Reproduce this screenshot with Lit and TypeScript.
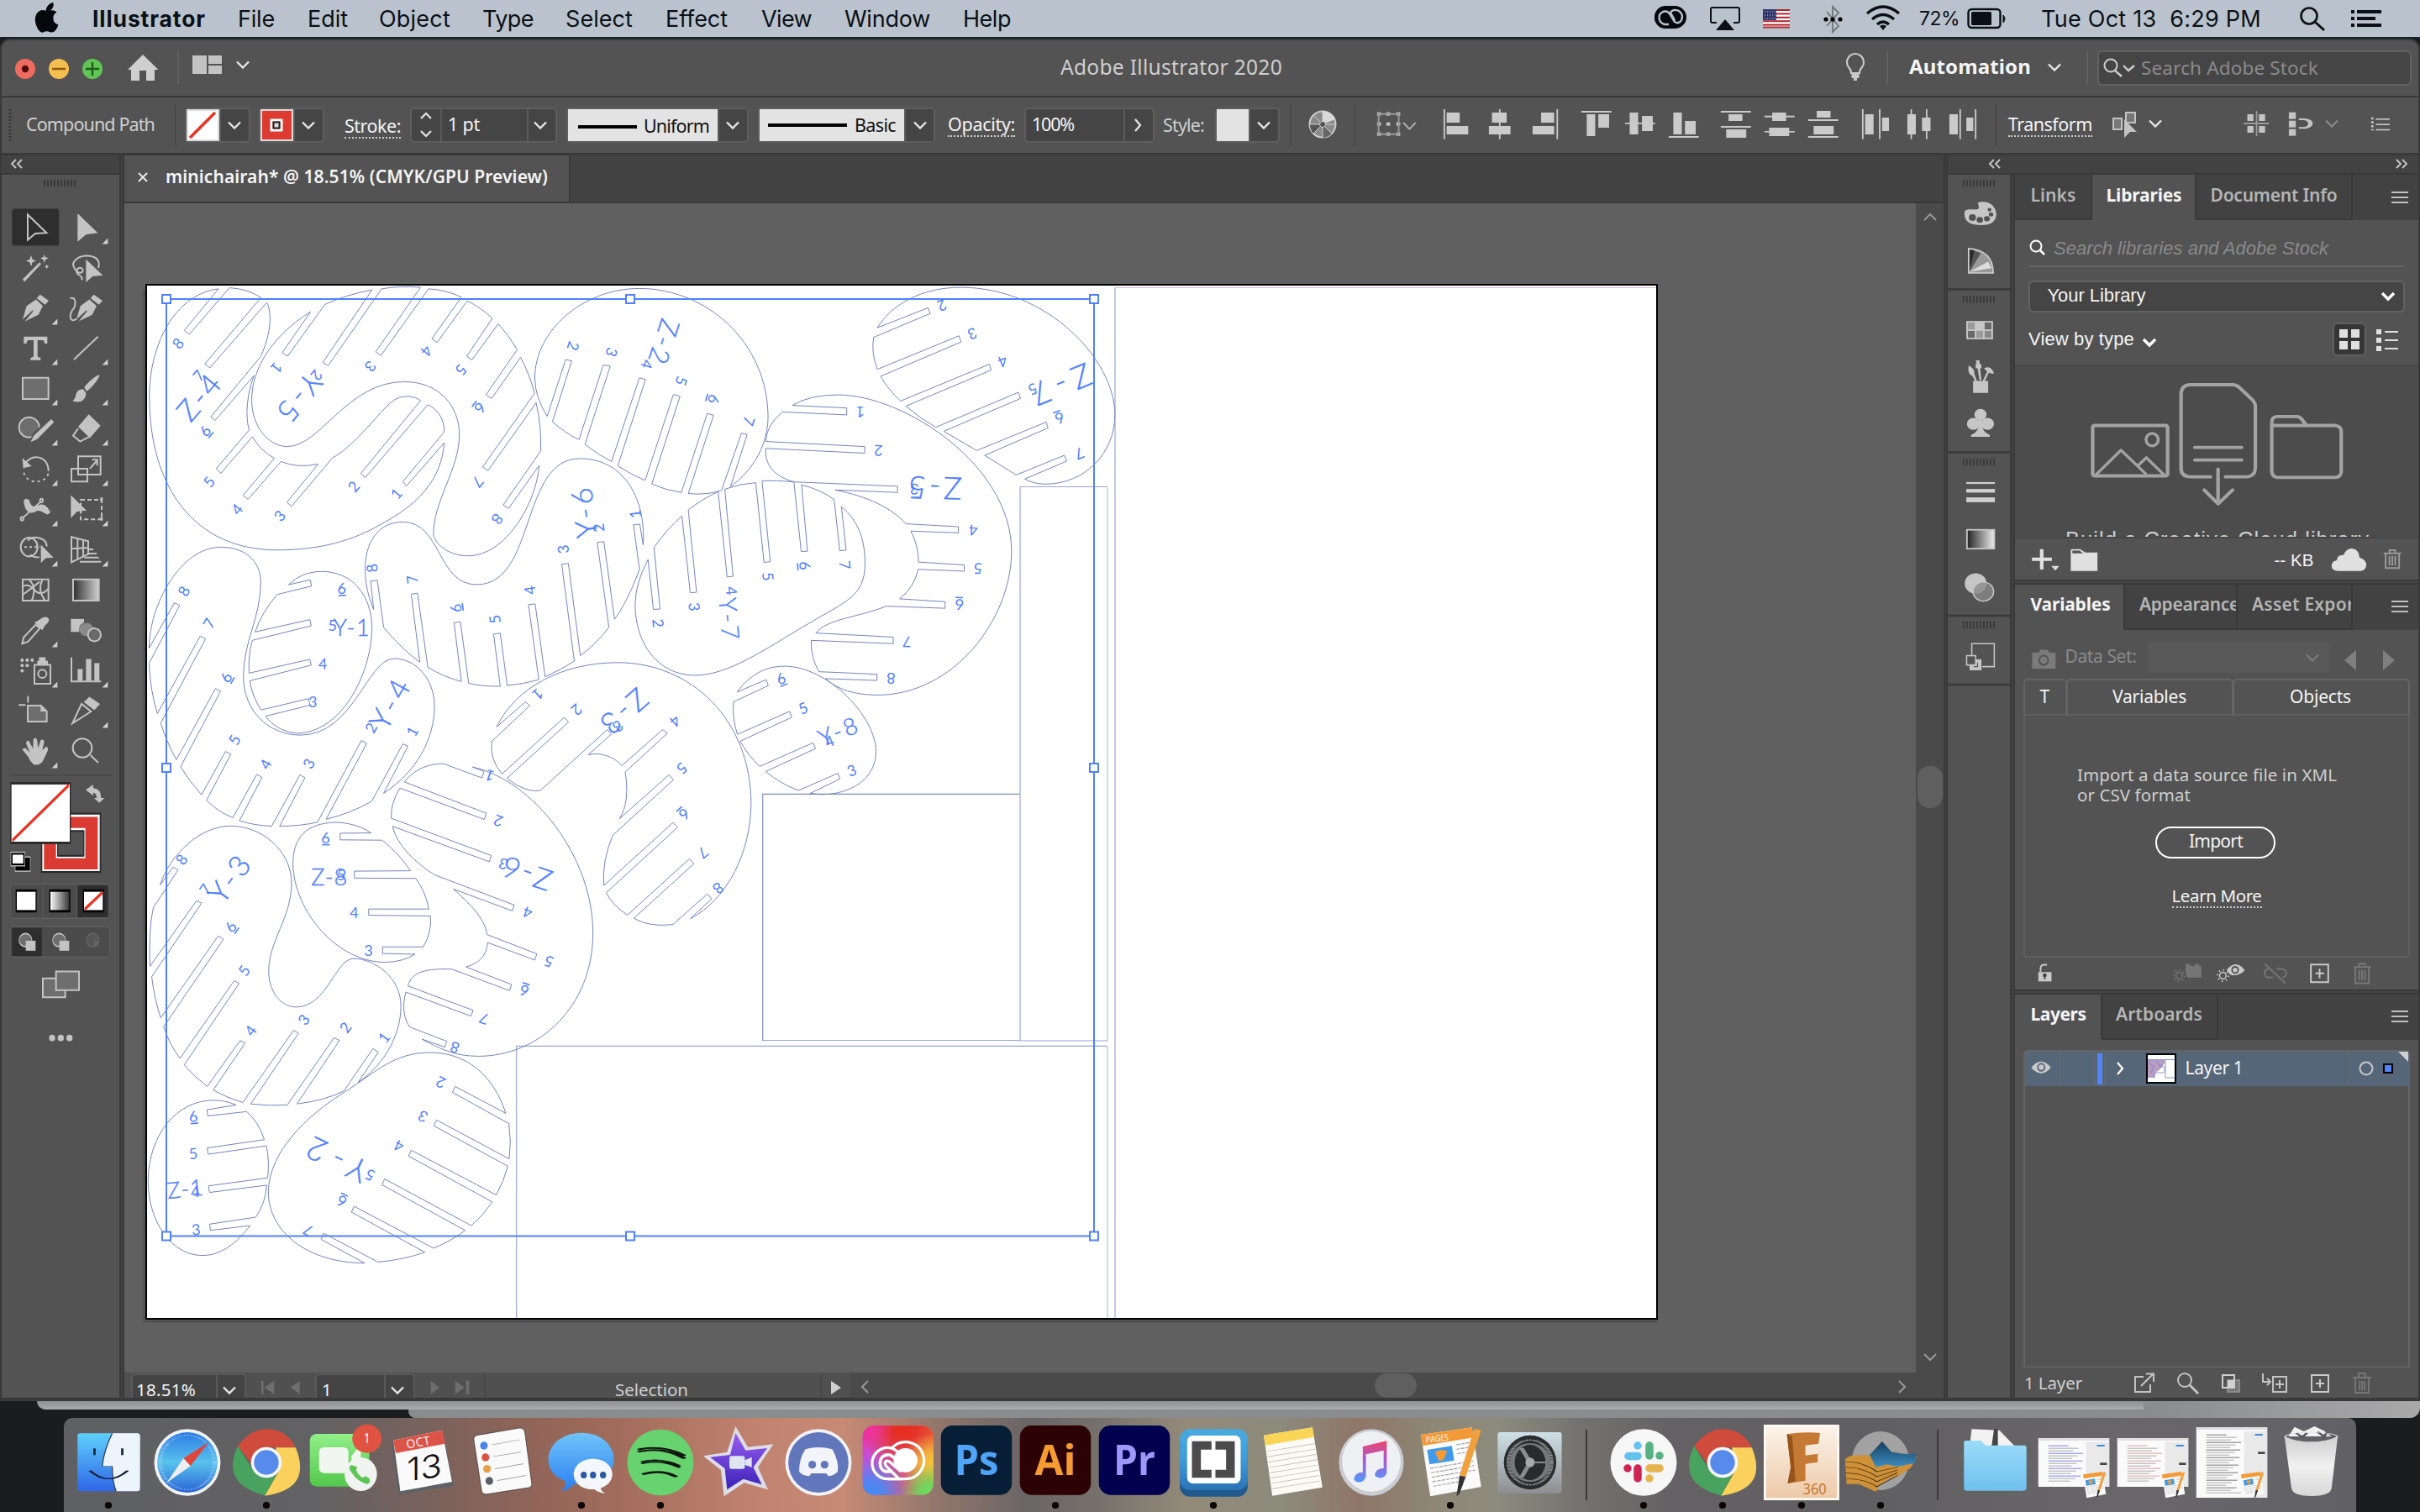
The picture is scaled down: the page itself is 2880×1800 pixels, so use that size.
import { LitElement, html, svg, css, nothing } from "lit";

type Item = { x: number; y: number; w: number; h: number; t: unknown; c?: string };
type View = { ox: number; oy: number; sx: number; sy: number };

/* Icon coordinate spaces: origin on the page plus units per pixel. */
const LEFT: View = { ox: 0, oy: 0, sx: 1.08889, sy: 3 };
const RIGHT: View = { ox: 1440, oy: 0, sx: 1.08889, sy: 3 };
const STATUS_L: View = { ox: 0, oy: 1600, sx: 1.08889, sy: 3 };
const LIB: View = { ox: 2280, oy: 180, sx: 2.6133, sy: 2.8 };
const VARS: View = { ox: 2280, oy: 690, sx: 2.6133, sy: 2.529 };

/* Line of boxes flowing left to right; gaps come from the item data. */
const row = (ox: number, oy: number, items: Item[]) => {
  let cur = ox;
  return html`<div class="row">${items.map((i) => {
    const m = i.x - cur;
    cur = i.x + i.w;
    return html`<div class="cell ${i.c ?? ""}" style="margin:${i.y - oy}px 0 0 ${m}px;width:${i.w}px;height:${i.h}px">${i.t}</div>`;
  })}</div>`;
};

const BASE: Record<string, number> = { ui: 0.888, sf: 0.864, hv: 0.8465 };
const tx = (x: number, base: number, w: number, size: number, text: string, cls = "", font = "ui"): Item => ({
  x, y: base - BASE[font] * size, w, h: size, c: `txt ${font} ${cls}`,
  t: html`<fit-text .w=${w} .size=${size} .text=${text}></fit-text>`,
});

const ic = (v: View, x0: number, y0: number, x1: number, y1: number, body: unknown): Item => {
  const w = (x1 - x0) / v.sx, h = (y1 - y0) / v.sy;
  return {
    x: v.ox + x0 / v.sx, y: v.oy + y0 / v.sy, w, h,
    t: html`<svg class="ic" width=${w} height=${h} viewBox="${x0} ${y0} ${x1 - x0} ${y1 - y0}" preserveAspectRatio="none">${body}</svg>`,
  };
};
const px = (x: number, y: number, w: number, h: number, body: unknown): Item => ({
  x, y, w, h, t: html`<svg class="ic" width=${w} height=${h} viewBox="${x} ${y} ${w} ${h}">${body}</svg>`,
});
const box = (x: number, y: number, w: number, h: number, c: string, items: Item[] = [], b = 0): Item => ({
  x, y, w, h, c, t: items.length ? row(x + b, y + b, items) : nothing,
});
const chev = (cx: number, cy: number, col = "#e6e6e6", r = 7) =>
  px(cx - 9, cy - 8, 18, 16, svg`<path d="M${cx - r},${cy - r / 2} L${cx},${cy + r / 2} L${cx + r},${cy - r / 2}" fill="none" stroke=${col} stroke-width="2.4"/>`);
const R = (l: number[][]) => l.map((r) => svg`<rect x=${r[0]} y=${r[1]} width=${r[2]} height=${r[3]}/>`);
const vline = (x: number, y: number, h: number, c = "sep") => box(x, y, 2, h, c);

class FitText extends LitElement {
  static properties = { w: { type: Number }, size: { type: Number }, text: { type: String } };
  declare w: number; declare size: number; declare text: string;
  static styles = css`
    :host { display: block; white-space: pre; line-height: 1; }
    span { display: inline-block; }
  `;
  render() { return html`<span style="font-size:${this.size}px">${this.text}</span>`; }
  updated() {
    const s = this.renderRoot.querySelector("span") as HTMLElement;
    s.style.letterSpacing = "0";
    const n = s.getBoundingClientRect().width;
    s.style.letterSpacing = `${(this.w - n) / this.text.length}px`;
  }
}
customElements.define("fit-text", FitText);

/* ---------- artwork ---------- */
const A: View = { ox: 160, oy: 320, sx: 2.529, sy: 2.3059 };
const B: View = { ox: 740, oy: 320, sx: 2.529, sy: 2.3059 };
const C: View = { ox: 160, oy: 920, sx: 2.529, sy: 2.3059 };
type Piece = { v: View; d: string; a: number; n: [string, number, number][]; big: [string, number, number, number, number] };
const PIECES: Piece[] = [
  { v: A, a: -50, big: ["Z-4", 193, 353, 35, 60],
    n: [["8", 131, 205], ["7", 193, 293], ["6", 213, 445], ["5", 225, 585], ["4", 309, 660], ["3", 437, 678], ["2", 660, 598], ["1", 788, 617]],
    d: "M253,55 C120,70 45,210 45,350 C45,600 180,772 430,772 C560,772 660,745 740,702 C850,650 925,580 932,478 L819,596 L808,584 L932,448 C935,420 915,385 883,373 L695,573 L681,562 L861,362 C845,350 815,345 788,357 C750,373 680,475 595,520 L473,652 L459,641 L553,536 Q490,548 441,529 L342,633 L327,622 L421,520 Q380,500 355,461 L260,561 L246,549 L345,443 C332,400 340,340 360,293 L243,416 L230,406 L380,241 C400,200 415,150 405,110 Q402,95 398,93 L227,272 L212,261 L381,79 Q340,55 286,52 L165,180 L150,169 Z" },
  { v: A, a: 129, big: ["Y-5", 497, 353, 35, 62],
    n: [["1", 428, 272], ["2", 548, 292], ["3", 710, 268], ["4", 879, 226], ["5", 983, 277], ["6", 1040, 382], ["7", 1033, 585], ["8", 1092, 687]],
    d: "M530,118 C420,180 353,270 353,360 C353,430 400,487 460,488 C560,488 640,310 812,310 C920,310 978,380 978,455 C978,550 898,640 900,730 C905,755 945,788 1003,788 C1120,788 1210,640 1218,540 L1126,658 L1110,648 L1223,500 Q1225,430 1209,368 L1064,554 L1048,544 L1204,342 Q1190,290 1162,243 L1075,356 L1058,346 L1152,222 Q1125,180 1095,151 L1016,250 L1000,240 L1077,136 Q1045,108 1002,88 L911,202 L895,192 L984,78 Q940,58 885,55 L742,238 L726,228 L861,51 Q800,46 744,55 L583,266 L567,257 L715,58 Q640,70 573,98 L461,240 L445,230 Z" },
  { v: A, a: 0, big: ["Y-1", 653, 986, 27, 43],
    n: [["6", 624, 877], ["5", 596, 978], ["4", 567, 1084], ["3", 537, 1189]],
    d: "M464,867 C490,845 520,831 565,831 C650,831 715,890 715,990 C710,1120 620,1273 490,1275 C450,1272 415,1255 395,1228 L528,1198 L524,1180 L381,1211 Q355,1175 347,1131 L532,1088 L528,1072 L345,1110 Q342,1060 355,1020 L532,980 L528,963 L363,997 Q385,940 430,894 L533,871 L529,854 Z" },
  { v: A, a: -97, big: ["Y-6", 1353, 670, 35, 60],
    n: [["1", 1507, 673], ["2", 1397, 711], ["3", 1290, 770], ["4", 1190, 882], ["5", 1085, 962], ["6", 967, 932], ["7", 836, 853], ["8", 715, 822]],
    d: "M720,935 L711,857 L731,855 L750,984 Q800,1040 859,1080 L833,893 L852,891 L883,1094 Q930,1120 984,1133 L962,972 L981,969 L1006,1138 Q1050,1147 1101,1146 L1081,1003 L1101,1000 L1122,1144 Q1170,1140 1217,1128 L1186,922 L1206,920 L1236,1120 Q1285,1100 1324,1077 L1286,811 L1306,809 L1342,1062 Q1390,1030 1428,984 L1393,751 L1413,749 L1445,962 C1480,920 1510,850 1520,825 L1502,703 L1521,701 L1531,758 C1540,640 1480,521 1340,521 C1160,521 1210,867 1030,867 C910,867 925,695 808,695 C690,695 670,830 720,935 Z" },
  { v: A, a: -61, big: ["Y-4", 768, 1195, 35, 62],
    n: [["8", 149, 885], ["7", 225, 973], ["6", 276, 1122], ["5", 301, 1293], ["4", 395, 1360], ["3", 525, 1358], ["2", 712, 1260], ["1", 836, 1270]],
    d: "M44,1042 L120,917 L136,924 L44,1083 Q48,1160 69,1221 L198,1008 L214,1016 L79,1247 Q95,1295 126,1348 L244,1152 L259,1160 L139,1367 Q165,1407 202,1444 L274,1325 L290,1333 L217,1459 Q250,1490 296,1507 L368,1388 L384,1396 L316,1515 Q360,1528 413,1530 L498,1389 L513,1397 L437,1530 Q500,1530 551,1519 L683,1295 L699,1303 L577,1511 Q650,1495 714,1462 L808,1304 L823,1311 L750,1440 C850,1380 903,1290 903,1200 C903,1130 850,1070 782,1070 C700,1070 660,1280 500,1280 C400,1280 328,1210 328,1120 C328,1020 380,960 380,860 C380,800 330,764 260,764 C140,764 45,920 44,1042 Z" },
  { v: C, a: 199, big: ["Z-6", 1182, 277, 35, 60],
    n: [["1", 1069, 8], ["2", 1095, 132], ["3", 1110, 250], ["4", 1183, 383], ["5", 1247, 518], ["6", 1173, 598], ["7", 1052, 675], ["8", 964, 754]],
    d: "M1017,-16 L1052,-4 L1046,14 L930,-25 C870,-25 835,0 812,25 L1059,111 L1053,128 L799,42 Q770,85 773,125 L1074,227 L1068,244 L777,147 C790,200 850,250 903,280 L1143,363 L1137,379 L960,319 C1010,360 1055,400 1061,444 L1211,497 L1205,514 L1063,466 C1060,500 1040,522 998,533 L1135,581 L1129,598 L955,539 C880,537 835,545 823,585 L1019,652 L1013,668 L817,602 C805,640 810,675 829,698 L940,737 L934,753 L865,731 C915,755 960,778 1035,778 C1220,778 1380,640 1380,440 C1380,230 1200,20 1017,-16 Z" },
  { v: C, a: 0, big: ["Z-8", 586, 287, 27, 43],
    n: [["6", 575, 178], ["5", 622, 280], ["4", 661, 383], ["3", 704, 487]],
    d: "M712,165 C680,145 640,136 600,136 C520,140 477,175 477,250 C480,380 610,520 755,520 Q805,520 845,498 L747,496 L747,478 L869,478 Q895,440 891,393 L705,391 L705,374 L886,374 Q878,330 847,290 L662,289 L662,270 L831,269 Q790,215 745,185 L619,184 L619,166 Z" },
  { v: C, a: -54, big: ["Y-3", 285, 292, 35, 60],
    n: [["8", 142, 238], ["7", 213, 320], ["6", 290, 423], ["5", 330, 543], ["4", 350, 708], ["3", 510, 678], ["2", 635, 699], ["1", 751, 727]],
    d: "M77,308 L116,259 L131,267 L57,370 C45,420 45,480 47,531 L187,351 L202,358 L52,560 Q60,620 79,673 L252,448 L268,457 L88,697 Q105,745 137,784 L300,571 L315,578 L150,802 Q180,835 219,861 L318,735 L333,742 L237,871 Q280,893 326,905 L479,707 L494,715 L350,909 Q400,915 460,912 L601,727 L617,735 L489,909 Q570,900 630,874 L718,757 L734,767 L673,850 C740,810 802,730 802,640 C802,560 720,510 660,510 C605,510 580,643 487,643 C440,643 404,600 404,545 C404,460 473,400 473,300 C470,210 380,146 290,146 C200,146 110,220 77,308 Z" },
  { v: C, a: -6, big: ["Z-1", 152, 1142, 27, 43],
    n: [["6", 177, 943], ["5", 177, 1045], ["4", 183, 1150], ["3", 185, 1254]],
    d: "M306,912 C280,902 260,899 235,899 C130,900 43,990 41,1120 C41,1230 110,1325 205,1325 C260,1325 310,1290 348,1243 L229,1256 L226,1239 L365,1220 Q395,1180 398,1132 L226,1152 L223,1134 L401,1112 Q407,1065 397,1024 L222,1047 L219,1030 L391,1007 Q375,960 338,930 L221,942 L218,925 Z" },
  { v: C, a: 206, big: ["Y-2", 610, 1062, 38, 76],
    n: [["2", 922, 850], ["3", 868, 943], ["4", 795, 1024], ["5", 709, 1104], ["6", 624, 1176], ["7", 523, 1256]],
    d: "M1118,935 C1080,830 1000,768 890,768 C780,768 730,820 630,878 C520,940 405,1040 403,1150 C403,1260 520,1345 693,1346 L562,1281 L569,1264 L733,1343 Q810,1337 874,1316 L653,1206 L661,1190 L900,1305 Q955,1285 995,1256 L745,1131 L753,1115 L1014,1243 Q1050,1215 1077,1178 L825,1052 L833,1036 L1089,1159 Q1112,1120 1124,1080 L901,969 L909,953 L1128,1060 Q1135,1010 1127,963 L957,877 L965,861 Z" },
  { v: A, a: 108, big: ["Z-2", 1594, 200, 32, 54],
    n: [["2", 1320, 212], ["3", 1436, 229], ["4", 1542, 262], ["5", 1646, 308], ["6", 1743, 358], ["7", 1849, 418]],
    d: "M1242,405 L1298,249 L1316,253 L1258,420 Q1295,450 1338,469 L1411,264 L1432,267 L1356,482 Q1395,510 1436,529 L1520,299 L1538,304 L1455,541 Q1495,565 1537,581 L1622,345 L1642,350 L1557,591 Q1600,608 1646,614 L1724,397 L1743,402 L1667,617 Q1725,622 1767,608 L1827,451 L1844,455 L1794,598 C1867,550 1905,480 1907,410 C1907,200 1720,54 1520,54 C1350,54 1205,170 1205,300 Q1205,350 1242,405 Z" },
  { v: B, a: 158, big: ["Z-7", 1323, 318, 38, 74],
    n: [["2", 964, 100], ["3", 1055, 178], ["4", 1146, 254], ["5", 1237, 330], ["6", 1318, 410], ["7", 1377, 507]],
    d: "M769,162 C810,100 900,51 1020,51 C1280,51 1484,250 1484,400 C1484,510 1390,591 1275,591 Q1240,591 1213,577 L1339,528 L1332,512 L1187,566 L1092,512 L1283,437 L1277,421 L1068,499 L969,446 L1200,356 L1194,339 L945,435 Q900,412 855,377 L1112,278 L1106,262 L839,363 Q800,330 779,295 L1021,201 L1015,184 L769,276 Q750,230 758,188 L928,123 L922,107 Z" },
  { v: B, a: 182, big: ["Z-5", 943, 602, 37, 64],
    n: [["1", 718, 393], ["2", 772, 499], ["3", 880, 605], ["4", 1057, 717], ["5", 1072, 823], ["6", 1016, 922], ["7", 858, 1024], ["8", 810, 1124]],
    d: "M513,375 L677,382 L677,401 L483,393 Q435,430 433,474 L731,488 L731,506 L433,493 C430,540 460,570 518,585 L830,597 L830,614 L642,607 C740,625 810,655 855,700 L1013,708 L1013,725 L870,720 Q893,760 893,805 L1031,813 L1031,830 L892,825 Q880,875 836,906 L973,914 L973,932 L797,926 C700,960 620,960 584,1000 L817,1011 L817,1029 L570,1020 Q568,1065 593,1106 L768,1113 L768,1130 L613,1125 C650,1155 700,1170 770,1170 C1000,1170 1173,960 1173,775 C1173,540 850,346 650,346 Q565,346 513,375 Z" },
  { v: B, a: 85, big: ["Y-7", 323, 960, 29, 50],
    n: [["2", 109, 973], ["3", 218, 928], ["4", 330, 884], ["5", 440, 845], ["6", 551, 815], ["7", 671, 813]],
    d: "M79,798 L95,935 L115,934 L97,765 Q135,715 181,679 L206,889 L225,888 L200,662 Q245,630 290,612 L317,846 L335,844 L310,605 Q355,590 403,587 L428,806 L447,804 L422,582 Q470,580 518,585 L540,776 L559,775 L541,593 Q595,605 639,633 L656,774 L675,772 L661,653 C710,690 732,740 732,810 C732,900 670,915 560,975 C430,1045 320,1116 220,1116 C110,1116 40,1030 40,920 Q42,860 79,798 Z" },
  { v: B, a: 139, big: ["Z-3", 8, 1215, 35, 62],
    n: [["1", -253, 1168], ["2", -136, 1210], ["3", -12, 1256], ["4", 160, 1242], ["5", 181, 1371], ["6", 188, 1497], ["7", 244, 1603], ["8", 290, 1700]],
    d: "M-377,1258 L-290,1189 L-277,1199 L-391,1297 Q-399,1345 -361,1387 L-174,1232 L-160,1244 L-346,1399 Q-287,1440 -245,1432 L-44,1265 L-31,1277 L-101,1334 C-57,1325 -17,1345 0,1364 L123,1265 L137,1275 L10,1382 C20,1430 15,1480 -7,1510 L142,1389 L155,1403 L-27,1555 Q-60,1624 -54,1693 L154,1520 L168,1533 L-47,1713 Q-27,1748 17,1774 L203,1620 L217,1633 L36,1783 Q84,1808 154,1800 L257,1716 L271,1729 L206,1784 C320,1730 388,1599 389,1468 C389,1240 210,1081 -12,1081 C-180,1081 -320,1150 -377,1258 Z" },
  { v: B, a: -22, big: ["Y-8", 650, 1270, 28, 48],
    n: [["6", 479, 1125], ["5", 546, 1206], ["4", 625, 1297], ["3", 692, 1377]],
    d: "M347,1162 C385,1115 430,1091 490,1091 C620,1091 765,1230 765,1325 C765,1400 690,1443 600,1443 L567,1440 L657,1400 L650,1385 L532,1432 Q480,1415 433,1380 L583,1317 L576,1301 L415,1366 Q380,1335 356,1297 L512,1231 L505,1215 L348,1278 Q332,1235 336,1189 L441,1144 L434,1128 Z" },
];
const label = (v: View, t: string, x: number, y: number, a: number, s: number, len?: number) => {
  const X = v.ox + x / v.sx, Y = v.oy + y / v.sy;
  return svg`<g transform="translate(${X},${Y}) rotate(${a})">
    <text class=${len ? "big" : ""} y=${s * 0.36} font-size=${s} text-anchor="middle" textLength=${len ?? nothing}>${t}</text>
    ${t === "6" ? svg`<path d="M-4,${s * 0.36 + 2} H5" stroke="#4f80ff" stroke-width="1.6"/>` : nothing}</g>`;
};
const artwork = () => svg`
  <rect x="170" y="345" width="6" height="1229" fill="#525252"/><rect x="172" y="1570" width="1800" height="5" fill="#525252"/>
  <rect x="174" y="339" width="1798" height="1231" fill="#fff" stroke="#000" stroke-width="2"/>
  <g fill="none" stroke-width="2" stroke="#d3d9ee">
    <path d="M1318,580 V1239 M1318,1246 V1569"/><path d="M1214,580 V945" stroke="#c3cae6"/>
  </g>
  <g fill="none" stroke="#9ba7d6" stroke-width="1.2">
    <path d="M1327,1569 V342"/><path d="M1327,342.500 H1971" stroke="#dcb9ea"/>
    <path d="M1214,579.500 H1318 M1214,945 V1239 H1318"/>
    <path d="M907.700,1239 V945.300 H1213.500" stroke="#7d8cc6"/><path d="M908,1238.500 H1214"/>
    <path d="M614.700,1569 V1245.300 H1318"/>
  </g>
  ${PIECES.map((p) => svg`<path class="cut" d=${p.d} transform="translate(${p.v.ox},${p.v.oy}) scale(${1 / p.v.sx},${1 / p.v.sy})"/>`)}
  <g class="nums">${PIECES.map((p) => svg`
    ${p.n.map((n) => label(p.v, n[0], n[1], n[2], p.a, 18))}
    ${label(p.v, p.big[0], p.big[1], p.big[2], p.a, p.big[3], p.big[4])}`)}</g>
  <rect x="198" y="356" width="1104" height="1115.500" fill="none" stroke="#4f80ff" stroke-width="2"/>
  ${[[198, 356], [750, 356], [1302, 356], [198, 914], [1302, 914], [198, 1471.5], [750, 1471.5], [1302, 1471.5]].map(
    ([x, y]) => svg`<rect x=${x - 5} y=${y - 5} width="10" height="10" fill="#fff" stroke="#4f80ff" stroke-width="2"/>`)}
`;

const grad = (id: string, stops: string[], v = true) => svg`<linearGradient id=${id} x1="0" y1="0" x2=${v ? 0 : 1} y2=${v ? 1 : 0}>${stops.map((s, i) => svg`<stop offset=${i / (stops.length - 1)} stop-color=${s}/>`)}</linearGradient>`;

/* ---------- tools ---------- */
const g = "#c3c3c3";
const TOOL_ICONS: unknown[] = [
  svg`<rect x="42" y="97" width="168" height="63" rx="8" ry="5" fill="#2e2e2e"/><path class="s" d="M98,107 L165,138 L125,139 L98,150 Z"/>`,
  svg`<path class="f" d="M276,105 L348,138 L306,141 L276,153 Z"/>`,
  svg`<path class="f" d="M80,217 L140,188 L146,191 L86,221 Z M110,176 l5,7 13,3 -13,2 -5,7 -5,-7 -13,-2 13,-3 Z M157,174 l3,5 12,2 -12,3 -3,6 -3,-6 -10,-3 10,-2 Z M166,191 l2,3 6,1 -6,2 -2,3 -2,-3 -6,-2 6,-1 Z"/>`,
  svg`<path class="s" d="M264,197 C250,187 280,177 308,177 C345,177 358,186 350,198 M264,197 C276,210 300,206 294,200 C284,194 268,200 274,206 C282,212 294,210 292,218"/><path class="f" d="M306,183 L366,210 L330,212 L306,222 Z"/>`,
  svg`<path class="f" d="M80,285 L94,262 L128,251 L152,262 L136,277 L88,288 L118,271 Q112,268 112,271 Z M130,249 L142,243 L173,253 L160,260 Z"/>`,
  svg`<path class="f" d="M272,285 L286,262 L318,251 L344,262 L328,277 L280,288 L310,271 Q304,268 304,271 Z M322,249 L334,243 L365,253 L352,260 Z"/><path class="s" d="M250,249 C275,246 270,264 256,270 C242,284 256,290 272,284"/>`,
  svg`<path class="f" d="M84,314 H168 V326 H158 Q158,320 150,320 H133 V346 Q133,349 144,350 V354 H108 V350 Q119,349 119,346 V320 H102 Q94,320 94,326 H84 Z"/>`,
  svg`<path class="s" d="M263,353 L349,314"/>`,
  svg`<rect class="s m" x="80" y="384" width="92" height="36"/>`,
  svg`<path class="f" d="M355,379 C340,380 312,392 300,400 L308,407 C328,400 350,388 355,379 Z M296,403 C280,403 270,408 270,414 Q266,421 258,423 C285,428 306,422 306,410 Z"/>`,
  svg`<ellipse class="s m" cx="103" cy="468" rx="36" ry="17"/><path d="M102,496 L116,478 L180,450 L196,458 L134,492 Z" fill="#535353"/><path class="f" d="M108,493 L120,482 L182,454 L192,459 L132,488 Z"/>`,
  svg`<path class="f" d="M316,446 L358,465 L320,486 L278,467 Z"/><path class="s" d="M278,470 L260,482 L285,492 L318,484"/>`,
  svg`<path class="s" stroke-width="3" d="M88,530 C110,512 172,515 172,542"/><path class="f" d="M79,520 L82,537 L112,534 Z"/><path class="s" stroke-dasharray="3 4" d="M84,545 C95,565 160,565 172,546"/>`,
  svg`<rect class="s" x="278" y="517" width="80" height="31"/><rect class="s" x="254" y="538" width="57" height="22"/><path class="s" d="M320,538 L344,525 M328,523 H346 V533"/>`,
  svg`<path class="f" d="M84,592 Q92,586 104,592 Q110,606 132,601 C154,594 172,604 176,610 Q182,614 183,605 Q180,614 168,616 C150,612 140,607 126,611 C100,618 84,606 84,592 Z"/><path class="s" d="M82,621 L142,595"/><ellipse class="s" cx="78" cy="623" rx="5" ry="3"/><ellipse class="s" cx="147" cy="592" rx="5" ry="3"/>`,
  svg`<rect class="s" stroke-dasharray="5 3" x="287" y="591" width="75" height="33"/><path class="f" d="M252,583 L308,609 L274,611 L252,622 Z M357,587 h9 v6 h-9 Z M357,620 h9 v6 h-9 Z"/>`,
  svg`<ellipse class="s" cx="103" cy="671" rx="30" ry="16"/><path class="s" d="M98,660 C120,650 165,655 166,670 M106,684 Q124,690 140,688"/><path class="s" stroke-dasharray="3 3" d="M86,671 H142"/><path class="f" d="M145,667 L190,689 L162,690 L145,698 Z"/>`,
  svg`<path class="s" d="M254,654 L314,661 V683 L254,697 Z M254,674 L314,672 M276,657 V692 M296,659 V687"/><path class="s" stroke-width="1" d="M316,675 H332 M310,682 H344 M300,689 H352 M284,696 H360"/>`,
  svg`<rect class="s" x="80" y="726" width="92" height="36"/><path class="s" d="M80,738 Q100,732 122,744 T172,742 M104,727 Q132,740 112,762 M150,727 Q132,744 160,762 M80,752 Q110,742 140,730"/>`,
  svg`<defs>${grad("gr", ["#303030", "#d0d0d0"], false)}</defs><rect x="260" y="726" width="92" height="36" fill="url(#gr)" stroke=${g} stroke-width="2" vector-effect="non-scaling-stroke"/>`,
  svg`<path class="s" d="M78,835 L84,824 L126,803 L141,809 L98,832 Z"/><path class="f" d="M122,799 L134,796 L150,791 Q168,787 174,794 Q174,799 160,804 L150,812 Z"/>`,
  svg`<rect class="f" x="252" y="793" width="47" height="22"/><ellipse cx="308" cy="811" rx="26" ry="12" fill="#8b8b8b" stroke="#535353" stroke-width="1.500"/><ellipse cx="336" cy="820" rx="23" ry="11" fill="#6a6a6a" stroke=${g} stroke-width="2" vector-effect="non-scaling-stroke"/>`,
  svg`<rect class="s" x="122" y="871" width="57" height="32"/><ellipse class="s" cx="150" cy="886" rx="15" ry="7"/><path class="f" d="M138,858 h24 v6 h8 v7 h-38 v-7 h6 Z"/>${[[78, 863], [96, 863], [114, 863], [78, 872], [96, 872], [78, 881]].map(([x, y]) => svg`<ellipse class="f" cx=${x} cy=${y} rx="6" ry="3"/>`)}`,
  svg`<path class="s" d="M254,858 V899 H360"/><g class="f">${R([[276, 878, 18, 20], [306, 861, 19, 37], [336, 868, 18, 30]])}</g>`,
  svg`<path class="s" d="M66,939 H90 M99,924 V935"/><path class="s m" d="M98,940 H145 L166,950 V967 H98 Z"/><path class="f" d="M144,938 V950 H168 Z"/>`,
  svg`<path class="s" d="M258,970 L290,937 L324,950 Z"/><path class="f" d="M318,925 L356,937 L336,948 L298,934 Z"/>`,
  svg`<path class="f" d="M79,1015 Q84,1010 92,1013 L106,1020 L92,1004 Q94,998 102,1000 L117,1013 L118,998 Q124,992 131,997 L135,1012 L144,999 Q152,995 157,1001 L150,1016 L162,1010 Q172,1010 170,1016 L152,1034 Q142,1042 120,1040 Q108,1036 100,1027 Z"/>`,
  svg`<ellipse class="s" cx="293" cy="1012" rx="34" ry="16"/><path class="s" stroke-width="4" d="M322,1024 L350,1037"/>`,
];
const CORNER = new Set([1, 4, 6, 7, 8, 9, 10, 11, 12, 13, 14, 15, 16, 17, 20, 22, 23, 25, 26]);
const toolIcon = (body: unknown, i: number) => {
  const c = i % 2, r = Math.floor(i / 2), x = 35 + c * 180, y = 95 + 68.4 * r;
  const tx0 = 184 + c * 180, ty = 157 + 68.4 * r;
  return html`<svg class="tool" viewBox="${x} ${y} 180 68.400" preserveAspectRatio="none">${body}
    ${CORNER.has(i) ? svg`<path fill="#d0d0d0" d="M${tx0},${ty} L${tx0 + 20},${ty - 10} V${ty} Z"/>` : nothing}</svg>`;
};

/* ---------- dock ---------- */
const st = (x: number, y: number, size: number, len: number, text: string, fill: string, wt = 600) =>
  svg`<g transform="translate(${x},${y}) scale(1.089,3)"><text font-family="Open Sans, sans-serif" font-weight=${wt} font-size=${size} textLength=${len} lengthAdjust="spacingAndGlyphs" text-anchor="middle" fill=${fill}>${text}</text></g>`;
const adobe = (cx: number, bg: string, fg: string, t: string, w: number) =>
  svg`<rect x=${cx - 46} y="291" width="92" height="248" rx="15" ry="42" fill=${bg}/>${st(cx, 467, 51, w, t, fg, 700)}`;
const chrome = (c: number) => svg`
  <path d="M${c - 37},364 Q${c - 20},304 ${c},304 Q${c + 26},304 ${c + 38},370 H${c} L${c - 16},440 Z" fill="#cf4b3b"/>
  <path d="M${c + 38},370 Q${c + 60},520 ${c - 2},542 L${c + 17},450 L${c + 12},370 Z" fill="#f9d15c"/>
  <path d="M${c - 37},364 Q${c - 60},500 ${c - 2},541 L${c + 15},455 Q${c},485 ${c - 17},452 Z" fill="#48a35f"/>
  <ellipse cx=${c} cy="423" rx="20" ry="55" fill="#f4f6f8"/><ellipse cx=${c} cy="423" rx="16" ry="44" fill="#568bec"/>`;
const pagesPen = (x: number, y: number, k: number) => svg`<g transform="translate(${x},${y}) scale(${k})">
  <path d="M0,26 L66,0 L78,212 L12,246 Z" fill="#fafafa"/><path d="M0,26 L66,0 L68,36 L2,66 Z" fill="#f19a37"/>
  <path d="M8,80 L40,66 L43,118 L11,132 Z" fill="#3f9bea"/><path d="M18,88 L25,80 L34,84 L30,112 L24,122 Z" fill="#f39a35"/>
  <path d="M46,62 L64,54 M46,78 L64,70 M47,94 L65,86 M12,146 L68,120 M13,162 L69,136 M14,178 L70,152 M15,194 L50,178 M16,210 L48,194" stroke="#9a9a9a" stroke-width="3" stroke-dasharray="5 1.500"/>
  <path d="M69,4 L78,10 L58,176 L50,172 Z" fill="#f0a03c"/><path d="M50,172 L58,176 L50,236 L46,246 Z" fill="#333"/></g>`;
const doc = (c: number, y: number, h: number, link: string) => svg`
  <rect x=${c - 46} y=${y} width="92" height=${h} fill="#fafafa"/><rect x=${c + 16} y=${y + 14} width="30" height=${h - 14} fill="#e9e9ea"/>
  <rect x=${c - 46} y=${y} width="92" height="9" fill="#dedede"/>
  ${Array.from({ length: Math.floor(h / 9) - 4 }, (_, i) => svg`<rect x=${c - 33} y=${y + 26 + i * 9} width=${26 + ((i * 13) % 20)} height="3" fill=${i % 3 ? "#aaa" : link}/>`)}
  <rect x=${c + 30} y=${y + 24} width="10" height="6" fill="#3b8ae0"/><rect x=${c + 34} y=${y + 88} width="9" height="8" fill="#444"/>
  ${pagesPen(c + 12, 456, 0.38)}`;
type DockItem = { c: number; dot?: boolean; b: unknown };
const DOCK: (DockItem | null)[] = [
  { c: 140, dot: true, b: svg`<rect x="100" y="319" width="81" height="207" rx="4" ry="10" fill="url(#fd)"/><path d="M145,319 Q134,380 132,437 H145 Q145,490 150,526 H177 Q181,526 181,516 V329 Q181,319 177,319 Z" fill="#eef4fb"/><path d="M145,319 Q134,380 132,437 H145 Q145,490 150,526" fill="none" stroke="#36465c" stroke-width="1.500"/><path d="M122,373 V397 M158,373 V397" stroke="#13263b" stroke-width="3"/><path d="M116,452 Q140,510 165,452" fill="none" stroke="#0d1d30" stroke-width="4"/>` },
  { c: 242, b: svg`<ellipse cx="242" cy="423" rx="43" ry="119" fill="#f0f2f4"/><ellipse cx="242" cy="423" rx="39" ry="108" fill="url(#sf)"/><ellipse cx="242" cy="423" rx="35" ry="97" fill="none" stroke="#b7d7f8" stroke-width="5" stroke-dasharray="1 3"/><path d="M270,350 L237,408 L246,436 Z" fill="#e0453a"/><path d="M215,496 L237,408 L246,436 Z" fill="#eee"/>` },
  { c: 345, dot: true, b: chrome(345) },
  { c: 450, b: svg`<rect x="404" y="321" width="77" height="188" rx="9" ry="24" fill="url(#ft)"/><rect x="416" y="369" width="38" height="92" rx="6" ry="16" fill="#f2f6f1"/><path d="M458,400 L470,360 V440 L458,425 Z" fill="#f2f6f1"/><ellipse cx="470" cy="465" rx="21" ry="60" fill="#f1f3f1"/><path d="M458,432 Q452,440 459,462 Q466,492 478,500 Q484,496 481,480 L476,472 L472,478 Q464,460 464,448 L466,440 Z" fill="#5bc753"/><ellipse cx="478" cy="338" rx="19" ry="51" fill="#e05341"/>${st(478, 354, 17, 8, "1", "#fff", 400)}` },
  { c: 550, b: svg`<path d="M508,350 L575,312 L589,506 L518,538 Z" fill="#5d6267"/><path d="M511,344 L574,308 L587,492 L520,526 Z" fill="#fafafa"/><path d="M511,344 L574,308 L578,356 L514,390 Z" fill="#dc5348"/>
    <g transform="translate(544,366) rotate(-4) scale(1.089,3) skewY(-8)"><text text-anchor="middle" font-family="Open Sans" font-size="14" fill="#fff" textLength="29">OCT</text></g><g transform="translate(551,482) scale(1.089,3) skewY(-8)"><text text-anchor="middle" font-family="Inter" font-weight="300" font-size="38" fill="#111" textLength="42" lengthAdjust="spacingAndGlyphs">13</text></g>` },
  { c: 652, b: svg`<path d="M619,326 L674,300 Q680,300 681,315 L690,500 Q690,512 684,514 L632,536 Q626,538 625,524 L615,345 Q614,330 619,326 Z" fill="#fafafa" stroke="#222" stroke-width="1"/><ellipse cx="628" cy="363" rx="5" ry="14" fill="#4a84e9"/><ellipse cx="630" cy="405" rx="5" ry="14" fill="#dc5343"/><ellipse cx="632" cy="446" rx="5" ry="14" fill="#e8a04a"/><ellipse cx="635" cy="489" rx="5" ry="14" fill="#596066"/><path d="M638,360 L674,342 M640,402 L676,386 M642,446 L679,428 M645,488 L682,470" stroke="#999" stroke-width="2"/>` },
  { c: 755, dot: true, b: svg`<path d="M755,317 C780,317 797,360 797,412 C797,470 775,505 745,500 Q740,520 728,526 Q736,512 734,490 Q712,465 712,412 C712,360 730,317 755,317 Z" fill="url(#ms)"/><path d="M770,410 C785,410 795,435 795,465 C795,490 788,508 780,514 Q780,526 786,534 Q776,530 772,519 C755,522 745,495 745,465 C745,435 755,410 770,410 Z" fill="#f3f7fb"/>${[758, 770, 783].map((x) => svg`<ellipse cx=${x} cy="468" rx="4" ry="12" fill="#2959a0"/>`)}` },
  { c: 857, dot: true, b: svg`<ellipse cx="857" cy="423" rx="43" ry="118" fill="#66d36e"/><path d="M830,384 Q860,366 887,407 M830,376 Q860,360 887,397" fill="none" stroke="#10150f" stroke-width="6" stroke-linecap="round"/><path d="M834,426 Q858,412 881,440 M834,420 Q858,406 881,434" fill="none" stroke="#10150f" stroke-width="5" stroke-linecap="round"/><path d="M836,464 Q858,448 876,472" fill="none" stroke="#10150f" stroke-width="7" stroke-linecap="round"/>` },
  { c: 960, b: svg`<path d="M955,294 L971,368 L1004,358 L984,440 L997,520 L966,496 L940,544 L936,450 L913,400 L944,386 Z" fill="#dcdde6"/><path d="M955,318 L968,380 L996,372 L978,440 L989,502 L965,482 L944,520 L941,444 L922,404 L948,396 Z" fill="url(#im)"/><rect x="947" y="400" width="20" height="46" rx="3" ry="8" fill="#dfe6f2"/><path d="M967,415 L976,404 V440 L967,432 Z" fill="#dfe6f2"/>` },
  { c: 1061, b: svg`<ellipse cx="1061" cy="423" rx="43" ry="119" fill="#f2f3f8"/><ellipse cx="1061" cy="423" rx="39" ry="108" fill="#6276bb"/><path d="M1044,376 Q1061,362 1079,376 Q1088,420 1086,456 Q1080,472 1074,472 L1071,462 H1052 L1049,472 Q1040,470 1036,456 Q1036,410 1044,376 Z" fill="#f3f4fa"/><ellipse cx="1053" cy="431" rx="5" ry="14" fill="#6276bb"/><ellipse cx="1069" cy="431" rx="5" ry="14" fill="#6276bb"/>` },
  { c: 1163, b: svg`<g transform="translate(1110.700,240) scale(.363,1)">
      ${["url(#c0)", "url(#c1)", "url(#c2)", "url(#c3)", "url(#c4)", "url(#c5)"].map((f) => svg`<rect x="20" y="52" width="253" height="247" rx="40" fill=${f}/>`)}
      <circle cx="173" cy="175" r="43" fill="#fff"/>
      <path d="M110,242 H172 A66,66 0 1 0 124,132" fill="none" stroke="#fff" stroke-width="10"/>
      <path d="M138,236 L96,196" stroke="#fff" stroke-width="0"/>
      <path d="M150,152 C136,132 120,130 110,130 A56,56 0 0 0 110,242 H150 L104,196 Q96,184 104,178 Q112,176 118,182 L158,216" fill="none" stroke="#fff" stroke-width="10"/>
      <path d="M126,214 Q84,224 82,186 Q84,152 118,156 L160,186" fill="none" stroke="#fff" stroke-width="11" stroke-linejoin="round"/></g>` },
  { c: 1266, b: adobe(1266, "#061e36", "#4fa4f7", "Ps", 53) },
  { c: 1368, dot: true, b: adobe(1368, "#2d0204", "#f59b33", "Ai", 49) },
  { c: 1471, b: adobe(1471, "#02014f", "#9c98f8", "Pr", 50) },
  { c: 1573, dot: true, b: svg`<g transform="translate(1110.700,240) scale(.363,1)"><rect x="1154" y="90" width="242" height="215" rx="36" fill="#215a8e"/><rect x="1154" y="64" width="242" height="218" rx="36" fill="url(#br)"/><rect x="1180" y="87" width="191" height="171" rx="20" fill="#fff"/><path d="M1197,107 H1267 V137 H1229 V209 H1267 V238 H1197 Z M1350,107 H1281 V137 H1319 V209 H1281 V238 H1350 Z" fill="#4b4b4b"/></g>` },
  { c: 1676, b: svg`<path d="M1639,326 L1702,298 L1715,512 L1650,542 Z" fill="#fbfaf5"/><path d="M1639,326 L1702,298 L1704,332 L1641,362 Z" fill="#fbd656"/>${[0, 1, 2, 3, 4, 5, 6, 7].map((i) => svg`<path d="M${1643 + i},${384 + i * 19} L${1705 + i},${356 + i * 19}" stroke="#b9b7b0" stroke-width="2"/>`)}` },
  { c: 1778, b: svg`<ellipse cx="1778" cy="423" rx="42" ry="119" fill="#c9ccd2"/><ellipse cx="1778" cy="419" rx="38" ry="108" fill="#eef0f4"/><path d="M1767,366 L1798,346 V460 Q1796,480 1788,478 Q1780,474 1784,456 Q1787,444 1794,444 V380 L1771,394 V474 Q1769,494 1761,494 Q1753,488 1757,470 Q1760,458 1767,458 Z" fill="url(#it)"/>` },
  { c: 1879, dot: true, b: svg`${pagesPen(1841, 298, 1)}<g transform="translate(1862,348) scale(1.089,3) skewY(-7)"><text text-anchor="middle" font-family="Open Sans" font-size="10" fill="#fff" textLength="27" lengthAdjust="spacingAndGlyphs">PAGES</text></g>` },
  { c: 1982, b: svg`<rect x="1941" y="315" width="83" height="218" rx="3" ry="8" fill="url(#sp)"/><ellipse cx="1983" cy="423" rx="34" ry="97" fill="#2a2b2d"/><ellipse cx="1983" cy="423" rx="28" ry="80" fill="none" stroke="#9a9b9d" stroke-width="5" stroke-dasharray="2.500 1.500"/><ellipse cx="1983" cy="423" rx="23" ry="66" fill="none" stroke="#77787a" stroke-width="6"/><path d="M1983,423 H2004 M1983,423 L1972,372 M1983,423 L1972,476" stroke="#8b8c8e" stroke-width="6"/><ellipse cx="1983" cy="423" rx="6" ry="17" fill="#a9a9aa"/>` },
  null,
  { c: 2130, dot: true, b: svg`<ellipse cx="2130" cy="423" rx="43" ry="119" fill="#f6f6f6"/><g transform="translate(2130,423) scale(1.089,3)" stroke-linecap="round" stroke-width="9.500">${[["#63c3ec", -7, -20, -7, -20], ["#63c3ec", -18, -7.5, -7, -7.5], ["#56b381", 7, -20, 7, -8], ["#56b381", 19, -8, 19, -8], ["#cd2553", -19, 7, -19, 7], ["#cd2553", -7, 7, -7, 19], ["#e6b54f", 7, 7, 19, 7], ["#e6b54f", 7, 19, 7, 19]].map((l) => svg`<path stroke=${l[0]} d="M${l[1]},${l[2]} L${+l[3] + 0.01},${l[4]}"/>`)}</g>` },
  { c: 2233, dot: true, b: chrome(2233) },
  { c: 2336, dot: true, b: svg`<rect x="2287" y="288" width="98" height="270" fill="#fdfaf6"/><rect x="2290" y="296" width="92" height="254" fill="url(#fu)"/><path d="M2317,322 Q2340,312 2360,318 L2358,356 L2341,362 V398 L2357,392 V422 L2341,428 V488 L2318,498 L2322,440 Z" fill="#c47a34"/><path d="M2317,322 L2324,330 L2328,490 L2318,498 L2322,440 Z" fill="#96541c"/>${st(2353, 536, 18, 28, "360", "#c4701f", 400)}` },
  { c: 2438, dot: true, b: svg`<ellipse cx="2438" cy="417" rx="37" ry="105" fill="#a2a2a2"/><path d="M2392,410 L2400,398 L2424,396 L2440,348 L2452,385 L2476,395 L2485,400 L2478,440 L2462,470 L2450,480 L2436,505 L2432,528 L2410,500 L2394,500 Z" fill="#cf9138"/><path d="M2424,396 L2440,348 L2452,385 Q2466,395 2485,392 L2482,425 L2460,438 L2446,430 L2432,440 Z" fill="url(#wv)"/>${[0, 1, 2, 3].map((i) => svg`<path d="M2393,${420 + i * 20} L2408,${424 + i * 20} Q2426,${440 + i * 18} 2433,${456 + i * 18} L2460,${440 + i * 10}" fill="none" stroke="#4b3517" stroke-width="2"/>`)}` },
  null,
  { c: 2586, b: svg`<path d="M2554,350 L2556,304 L2592,308 L2612,365 H2554 Z" fill="#f2f2f2"/><path d="M2585,303 L2590,303 V364 H2582 Z" fill="#444"/><path d="M2546,350 Q2546,345 2550,345 H2568 L2574,362 H2624 Q2627,362 2627,370 V516 Q2627,524 2622,524 H2550 Q2546,524 2546,516 Z" fill="url(#fo)"/>` },
  { c: 2688, b: doc(2688, 336, 174, "#7e83ee") },
  { c: 2791, b: doc(2791, 336, 174, "#e2a0a0") },
  { c: 2893, b: doc(2893, 297, 252, "#777") },
  { c: 2995, b: svg`<path d="M2966,330 L2974,296 L2986,312 L3000,294 L3012,310 L3022,330 Z" fill="#f1f1f1"/><path d="M2976,318 l8,14 l6,-14 M3004,314 l8,16 l5,-16" stroke="#555" stroke-width="4" fill="none"/><path d="M2961,330 Q2995,372 3030,330 L3022,515 Q3020,543 2996,543 Q2972,543 2970,515 Z" fill="url(#tr)"/><ellipse cx="2995.500" cy="332" rx="34" ry="17" fill="none" stroke="#d7d7d7" stroke-width="2"/>` },
];
const blot = (id: string, cx: number, cy: number, r: number, col: string) => svg`<radialGradient id=${id} cx=${cx} cy=${cy} r=${r}><stop offset="0" stop-color=${col}/><stop offset=".35" stop-color=${col} stop-opacity=".85"/><stop offset="1" stop-color=${col} stop-opacity="0"/></radialGradient>`;
const dockDefs = () => svg`<defs>${grad("fd", ["#5ed0fa", "#2f66e8"])}${grad("sf", ["#2c7be4", "#58c3ec", "#2863d6"])}${grad("ft", ["#91ef8a", "#53c74c"])}${grad("ms", ["#70c4f8", "#2b7ff3"])}${grad("im", ["#9a5cf0", "#3b23b8"])}
  ${grad("c0", ["#c04fe0", "#e8663c"], false)}${blot("c1", 0.55, 0, 0.6, "#e82b1b")}${blot("c2", 1, 0.55, 0.45, "#f5c43a")}${blot("c3", 0.95, 1, 0.45, "#62e060")}${blot("c4", 0.1, 1, 0.55, "#3f8df7")}${blot("c5", 0, 0, 0.45, "#f2309c")}
  ${grad("br", ["#48aadf", "#3f9cd8", "#2a72b4"])}${grad("wv", ["#173c5e", "#3d8dc0"])}${grad("it", ["#ec4668", "#a659dd", "#4f9df5"])}${grad("sp", ["#cfe0e8", "#8d8f91"])}${grad("fu", ["#fbf3ea", "#edc9a8"])}${grad("fo", ["#9bdcf9", "#6fc0ee"])}${grad("tr", ["#cfcfcf", "#f0f0f0", "#d8d8d8"])}</defs>`;
const dockCell = (d: DockItem | null) => d
  ? html`<svg class="app" viewBox="${d.c - 51.16} 264 102.330 336" preserveAspectRatio="none">${dockDefs()}${d.b}${d.dot ? svg`<ellipse cx=${d.c} cy="576" rx="4.500" ry="12" fill="#0a0403"/>` : nothing}</svg>`
  : html`<div class="dsep"></div>`;

/* ---------- small icons ---------- */
const menuIcon = (y: number) => px(2846, y, 20, 14, svg`<path d="M2846,${y + 1} H2866 M2846,${y + 7} H2866 M2846,${y + 13} H2866" stroke="#c0c0c0" stroke-width="2"/>`);
const trash = (v: View, x: number, y: number, k = 1, col = "#777") => ic(v, x, y, x + 58 * k, y + 66, svg`<path class="n" stroke=${col} d="M${x + 2},${y + 13} H${x + 56 * k} M${x + 20 * k},${y + 12} V${y + 3} H${x + 38 * k} V${y + 12} M${x + 8 * k},${y + 14} V${y + 62} H${x + 50 * k} V${y + 14} M${x + 20 * k},${y + 22} V${y + 54} M${x + 29 * k},${y + 22} V${y + 54} M${x + 38 * k},${y + 22} V${y + 54}"/>`);
const grip = (x: number, y: number) => svg`${Array.from({ length: 10 }, (_, i) => svg`<rect x=${x + i * 10.5} y=${y} width="5" height="23" fill="#3a3a3a"/>`)}`;
const combo = (x: number, w: number, split: number, items: Item[], cx: number) => [
  box(x, 128, w, 42, "combo", [...items, box(split, 130, 2, 38, "csep"), chev(cx, 149)], 2),
];

class AppRoot extends LitElement {
  static styles = css`
    :host { display: block; width: 2880px; height: 1800px; overflow: hidden; background: #1b1c1e; color: #d6d6d6; font-family: "Noto Sans", "Open Sans", sans-serif; }
    * { box-sizing: border-box; }
    .row { display: flex; align-items: flex-start; }
    .cell { flex: none; }
    .ic { display: block; overflow: visible; }
    .n { fill: none; stroke-width: 2px; vector-effect: non-scaling-stroke; }
    .txt { white-space: nowrap; }
    .ui { font-family: "Noto Sans", "Open Sans", sans-serif; }
    .sf { font-family: Inter, sans-serif; color: #0b1018; }
    .hv { font-family: "Liberation Sans", Arial, sans-serif; }
    .b { font-weight: 700; } .sb { font-weight: 600; } .it { font-style: italic; }
    .w { color: #f4f4f4; } .k { color: #111; } .dim { color: #8a8a8a; } .mid { color: #b4b4b4; } .lt { color: #cfcfcf; }
    .menubar { height: 44px; background: #bac3cd; }
    .gap { height: 2px; background: #17202b; }
    .win { height: 1622px; background: #535353; border: 2px solid #393939; border-bottom-width: 4px; border-radius: 12px 12px 0 0; display: flex; flex-direction: column; overflow: hidden; }
    .title { height: 66px; flex: none; } .ctrl { height: 71px; flex: none; border-top: 2px solid #393939; border-bottom: 3px solid #393939; }
    .main { display: flex; flex: 1; min-height: 0; }
    .sep { background: #484848; } .sep2 { background: #606060; }
    .find { background: #454545; border: 2px solid #626262; border-radius: 6px; }
    .combo { background: #454545; border: 2px solid #5e5e5e; border-radius: 5px; }
    .csep { background: #5a5a5a; }
    .light { background: #e3e3e3; }
    .white { background: #fff; border: 2px solid #dcdcdc; } .red { background: #dd3a32; border: 2px solid #dcdcdc; }
    .dots { border-bottom: 2px dotted #cfcfcf; }
    .tools { width: 140px; display: flex; flex-direction: column; flex: none; }
    .strip { height: 23px; background: #424242; border-bottom: 2px solid #393939; flex: none; }
    .toolgrid { display: grid; grid-template-columns: 60px 60px; margin: 39px 0 0 10px; }
    .tool { width: 60px; height: 48px; display: block; }
    .tool .s, .s { fill: none; stroke: #c3c3c3; vector-effect: non-scaling-stroke; stroke-width: 2px; } .tool .m, .m { fill: #6e6e6e; } .f { fill: #c3c3c3; }
    .tfoot { display: block; margin: 3px 0 0 10px; }
    .vgap { width: 6px; background: #424242; border: solid #393939; border-width: 0 2px; flex: none; }
    .vgap.thin { width: 5px; }
    .doc { width: 2165px; display: flex; flex-direction: column; background: #606060; flex: none; }
    .tabs { height: 57px; background: #424242; border-bottom: 2px solid #393939; display: flex; flex: none; }
    .dtab { width: 531px; height: 55px; background: #535353; border-right: 2px solid #393939; }
    .view { display: flex; height: 1392px; flex: none; }
    .canvas { display: block; width: 2132px; height: 1392px; }
    .cut { fill: none; stroke: #7585bd; stroke-width: 1px; vector-effect: non-scaling-stroke; }
    .nums { fill: #4f80ff; font-family: Lato, "Open Sans", sans-serif; }
    .nums .big { font-weight: 300; stroke: #4f80ff; stroke-width: .4px; }
    .vs { width: 33px; background: #4a4a4a; }
    .status { flex: 1; background: #4a4a4a; min-height: 0; }
    .stl { background: #505050; } .sbox { background: #444; border: 2px solid #5a5a5a; border-bottom: 0; border-radius: 5px 5px 0 0; }
    .thumb { background: #5f5f5f; border-radius: 15px; }
    .side { width: 560px; display: flex; flex-direction: column; flex: none; }
    .cols { display: flex; flex: 1; min-height: 0; }
    .dockcol { width: 74px; flex: none; } .dockcol svg { display: block; }
    .panels { width: 480px; display: flex; flex-direction: column; }
    .pt { background: #424242; flex: none; height: 54px; } .tab { border-right: 2px solid #393939; border-bottom: 2px solid #393939; overflow: hidden; } .tab.on { background: #535353; border-bottom-color: #535353; }
    .libhead { height: 172px; flex: none; } .libfoot { height: 49px; flex: none; } .varbody { height: 428px; flex: none; }
    .uline { background: #646464; }
    .drop { background: #454545; border: 2px solid #626262; border-radius: 6px; }
    .gbtn { background: #363636; border: 2px solid #606060; border-radius: 6px; }
    .empty { background: #4c4c4c; overflow: hidden; height: 207px; flex: none; border-top: 2px solid #464646; border-bottom: 2px solid #464646; }
    .pgap { height: 6px; background: #464646; border: solid #393939; border-width: 2px 0; flex: none; }
    .ds { background: #595959; border-radius: 4px; }
    .th { border: 2px solid #656565; border-bottom-color: #5e5e5e; border-radius: 5px 5px 0 0; }
    .tb { border: 2px solid #5e5e5e; border-top: 0; }
    .btn { border: 2px solid #fff; border-radius: 19px; }
    .sel { background: #566679; } .lsep { background: #5e6873; }
    .blue { background: #5584f7; } .thumbn { border: 2px solid #000; background: #fff; }
    .under { height: 20px; } .edge1 { background: linear-gradient(#8f9193, #a9abad); } .edge1.l { border-radius: 0 0 0 12px; } .edge2 { background: #8a8b8d; border-radius: 0 0 0 8px; } .edge3 { background: linear-gradient(90deg, #8a8b8d, #a9a9aa); border-radius: 0 0 12px 0; }
    .dock { width: 2728px; height: 112px; margin-left: 76px; border-radius: 10px 10px 0 0; display: flex; padding-left: 5.6px;
      background: linear-gradient(90deg, #5f6063 0, #626163 11%, #7a625c 16%, #8e6458 20%, #a16b5b 24%, #c0826f 30%, #c68a75 34%, #93776c 38%, #6a6566 42%, #75706a 45%, #938a79 49%, #8c8b7c 53%, #8f7668 56.500%, #8d8876 60%, #8c8b7d 62.500%, #757370 66%, #656265 70%, #5f5e61 78%, #69676a 90%, #616165 100%); }
    .app { width: 93.97px; height: 112px; flex: none; display: block; }
    .dsep { width: 2px; height: 84px; margin: 14px 20px 0 20px; background: #3b393b; flex: none; }
  `;

  menubar() {
    const m: [string, number, number][] = [["File", 283, 44], ["Edit", 366, 48], ["Object", 451, 85], ["Type", 574, 61], ["Select", 673, 80], ["Effect", 792, 74], ["View", 906, 60], ["Window", 1005, 102], ["Help", 1146, 57]];
    return row(0, 0, [
      px(41, 4, 28, 34, svg`<path fill="#05080d" d="M62,4 q1,6 -3,9 q-3,2 -6,2 q0,-5 3,-8 q3,-3 6,-3 Z M66,15.500 q-5,3 -4,8 q0,5 6,7 q-3,9 -8,9 q-2,0 -4,-1 q-3,-1 -6,1 q-4,1 -7,-5 q-5,-10 -1,-17 q4,-6 10,-4 q3,1 6,0 q5,-1 8,2 Z" transform="translate(1.500,-1)"/>`),
      tx(110, 32, 135, 26.5, "Illustrator", "b", "sf"),
      ...m.map((i) => tx(i[1], 32, i[2], 27, i[0], "", "sf")),
      px(1968, 7, 40, 28, svg`<path d="M1981,7 h12 a14,13.500 0 0 1 0,27 h-12 a13,13 0 0 1 -12,-14 a13,13 0 0 1 12,-13 Z" fill="#05080d"/><path d="M1986,29 h-5 a8,8 0 0 1 -2,-15 q6,-2 9,4 l5,8 q5,3 8,-2 q3,-7 -3,-11 q-7,-3 -10,2 l5,9" fill="none" stroke="#bac3cd" stroke-width="2.400"/>`),
      px(2034, 7, 38, 30, svg`<path d="M2043,27 h-5 q-2,0 -2,-2 v-14 q0,-2 2,-2 h30 q2,0 2,2 v14 q0,2 -2,2 h-5" fill="none" stroke="#0b1018" stroke-width="2"/><path d="M2053,23 L2064,36 H2042 Z" fill="#0b1018"/>`),
      px(2098, 11, 32, 22, svg`<rect x="2098" y="11" width="32" height="22" fill="#fff"/>${[11, 15.4, 19.8, 24.2, 28.6, 31.5].map((y) => svg`<rect x="2098" y=${y} width="32" height="2" fill="#b0262d"/>`)}<rect x="2098" y="11" width="16" height="13" fill="#31386e"/><path d="M2100,14 h13 M2100,18 h13 M2100,22 h13" stroke="#c9cfe6" stroke-width="1" stroke-dasharray="1 2"/>`),
      px(2169, 7, 24, 32, svg`<path d="M2174,14 L2188,31 L2181,38 V8 L2188,15 L2174,31" fill="none" stroke="#6d747c" stroke-width="1.800"/><circle cx="2173" cy="23" r="2.600"/><circle cx="2181" cy="23" r="2.600"/><circle cx="2190" cy="23" r="2.600"/>`),
      px(2220, 6, 42, 31, svg`<path d="M2222,16 Q2241,0 2260,16 M2228,23 Q2241,12 2254,23 M2234,29 Q2241,23 2248,29" fill="none" stroke="#0b1018" stroke-width="3.400"/><path d="M2237,31 Q2241,28 2245,31 L2241,36 Z" fill="#0b1018"/>`),
      tx(2284, 31, 48, 23, "72%", "", "sf"),
      px(2341, 9, 48, 26, svg`<rect x="2342.500" y="11" width="38" height="22" rx="4" fill="none" stroke="#0b1018" stroke-width="2.400"/><rect x="2346" y="14" width="24" height="16" rx="1.500" fill="#0b1018"/><path d="M2384,18 q4,4 0,9 Z" fill="#0b1018" stroke="#0b1018"/>`),
      tx(2429, 32, 262, 27, "Tue Oct 13  6:29 PM", "", "sf"),
      px(2736, 7, 32, 30, svg`<circle cx="2748" cy="19" r="9.500" fill="none" stroke="#0b1018" stroke-width="2.600"/><path d="M2755,26 L2766,36" stroke="#0b1018" stroke-width="3"/>`),
      px(2798, 12, 36, 20, svg`<g fill="#0b1018">${R([[2798, 12, 4, 4], [2798, 20, 4, 4], [2798, 28, 4, 4], [2805, 12, 29, 4], [2805, 20, 22, 4], [2805, 28, 29, 4]])}</g>`),
    ]);
  }

  title() {
    const light = (cx: number, c: string, m: string, s: string) => px(cx - 13, 69, 26, 26, svg`<circle cx=${cx} cy="82" r="12" fill=${c}/><path d=${m} stroke=${s} stroke-width="2.400" fill="none"/>`);
    return row(2, 48, [
      px(17, 69, 26, 26, svg`<circle cx="30" cy="82" r="12" fill="#ed6b60"/><circle cx="30" cy="82" r="4.200" fill="#500a06"/>`),
      light(70, "#f5bf4f", "M62,82 H78", "#8b5a15"),
      light(110, "#61c554", "M102,82 H118 M110,74 V90", "#1c5c16"),
      px(152, 64, 37, 34, svg`<path fill="#cfcfcf" d="M170,65 L188.500,83 H184 V96 H174 V84 H166 V96 H156 V83 H152 Z"/>`),
      vline(211, 60, 40, "sep2"),
      px(229, 66, 35, 22, svg`<g fill="#c3c3c3">${R([[229, 66, 17, 22], [248, 66, 16, 10], [248, 78, 16, 10]])}</g>`),
      chev(289, 77),
      tx(1262, 90, 264, 24.5, "Adobe Illustrator 2020", "lt"),
      px(2196, 63, 24, 34, svg`<path d="M2203,87 Q2203,83 2200,80 A10,10 0 1 1 2216,80 Q2213,83 2213,87 Z" fill="none" stroke="#c9c9c9" stroke-width="2.200"/><rect x="2203.500" y="87" width="9" height="6" fill="#c9c9c9"/><rect x="2206" y="93" width="4" height="3" fill="#c9c9c9"/>`),
      vline(2245, 60, 40, "sep2"),
      tx(2272, 88, 145, 24, "Automation", "b w"),
      chev(2445, 80),
      vline(2483, 60, 40, "sep2"),
      box(2496, 60, 374, 42, "find", [
        px(2503, 68, 38, 26, svg`<circle cx="2512" cy="78" r="7.500" fill="none" stroke="#ccc" stroke-width="2"/><path d="M2517,84 L2525,91 M2527,78 L2533,84 L2540,78" fill="none" stroke="#ccc" stroke-width="2.400"/>`),
        tx(2548, 90, 211, 22.5, "Search Adobe Stock", "dim"),
      ], 2),
    ]);
  }

  control() {
    const al: [number, number, number[][]][] = [
      [302, 336, [[303, 390, 2, 107], [307, 402, 17, 36], [307, 450, 28, 30]]], [361, 391, [[375, 390, 2, 107], [366, 402, 19, 36], [362, 450, 28, 30]]],
      [417, 452, [[449, 390, 2, 107], [429, 402, 17, 36], [418, 450, 28, 30]]], [480, 521, [[481, 396, 39, 6], [488, 408, 11, 78], [503, 408, 14, 48]]],
      [537, 578, [[538, 438, 39, 5], [544, 402, 11, 78], [560, 414, 14, 54]]], [594, 635, [[595, 486, 39, 6], [601, 402, 11, 78], [616, 432, 14, 48]]],
      [661, 702, [[662, 396, 39, 6], [672, 408, 18, 24], [662, 450, 39, 6], [669, 462, 26, 30]]], [718, 759, [[719, 413, 39, 6], [729, 402, 18, 30], [719, 468, 39, 5], [725, 456, 26, 30]]],
      [774, 815, [[786, 396, 18, 24], [775, 426, 39, 6], [782, 450, 26, 30], [775, 486, 39, 6]]], [844, 881, [[845, 390, 2, 107], [849, 408, 11, 72], [867, 390, 2, 107], [871, 420, 9, 48]]],
      [903, 935, [[908, 390, 2, 107], [904, 408, 11, 72], [928, 390, 2, 107], [923, 420, 11, 48]]], [957, 994, [[958, 408, 11, 72], [971, 390, 2, 107], [980, 420, 9, 48], [991, 390, 2, 107]]],
    ];
    return row(2, 116, [
      px(10, 130, 4, 38, svg`<path d="M12,130 V168" stroke="#3a3a3a" stroke-width="3" stroke-dasharray="2 2"/>`),
      tx(31, 156, 153, 21.5, "Compound Path", "lt"),
      vline(208, 124, 50),
      ...combo(220, 78, 261, [box(222, 130, 39, 38, "white", [px(224, 132, 35, 34, svg`<path d="M226,164 L256,134" stroke="#ea3323" stroke-width="3.500"/>`)], 2)], 279),
      ...combo(308, 78, 349, [box(310, 130, 39, 38, "red", [px(312, 132, 35, 34, svg`<rect x="323" y="143" width="12" height="12" fill="none" stroke="#fff" stroke-width="3"/><rect x="325.500" y="145.500" width="7" height="7" fill="#ddd" stroke="#222" stroke-width="2"/>`)], 2)], 367),
      { ...tx(410, 158, 67, 21.5, "Stroke:", "w dots"), h: 26 },
      ...combo(488, 175, 627, [px(490, 130, 34, 38, svg`<path d="M501,141 L507,135 L513,141 M501,156 L507,162 L513,156" fill="none" stroke="#e6e6e6" stroke-width="2.200"/>`), box(524, 130, 2, 38, "csep"), tx(533, 156, 38, 21.5, "1 pt", "w")], 643),
      ...combo(674, 217, 854, [box(676, 130, 178, 38, "light", [px(688, 149, 70, 4, svg`<rect x="688" y="149" width="70" height="4"/>`), tx(766, 158, 78, 21.5, "Uniform", "k")])], 872),
      ...combo(902, 211, 1076, [box(904, 130, 172, 38, "light", [px(914, 147, 94, 4, svg`<rect x="914" y="147" width="94" height="4"/>`), tx(1017, 157, 49, 21.5, "Basic", "k")])], 1095),
      { ...tx(1128, 156, 80, 21.5, "Opacity:", "w dots"), h: 26 },
      box(1219, 128, 155, 42, "combo", [tx(1228, 156, 50, 21.5, "100%", "w"), box(1337, 130, 2, 38, "csep"), px(1348, 140, 12, 18, svg`<path d="M1351,142 L1357,149 L1351,156" fill="none" stroke="#e6e6e6" stroke-width="2.200"/>`)], 2),
      tx(1384, 157, 49, 21.5, "Style:", "lt"),
      ...combo(1446, 77, 1486, [box(1448, 130, 38, 38, "light")], 1504),
      vline(1535, 124, 50),
      px(1557, 131, 34, 34, svg`<circle cx="1574" cy="148" r="15.500" fill="#8a8a8a" stroke="#ccc" stroke-width="2"/><path d="M1574,148 L1574,132 A16,16 0 0 1 1589,142 Z" fill="#dadada"/><path d="M1574,148 L1563,159 A16,16 0 0 1 1559,148 Z" fill="#555"/><path d="M1574,148 L1585,159 A16,16 0 0 1 1574,164 Z" fill="#666"/><path d="M1574,132 V164 M1558,148 H1590 M1563,137 L1585,159 M1585,137 L1563,159" stroke="#ccc"/><circle cx="1574" cy="148" r="3.500" fill="#535353" stroke="#ccc"/>`),
      vline(1611, 124, 50),
      ic(RIGHT, 214, 400, 270, 490, svg`<g fill="#c3c3c3">${R([[216, 402, 5, 12], [228, 402, 5, 12], [241, 402, 5, 12], [216, 438, 5, 12], [228, 438, 5, 12], [241, 438, 5, 12], [216, 474, 5, 12], [228, 474, 5, 12], [241, 474, 5, 12]])}</g><path class="n" stroke="#999" stroke-width="1" d="M218,408 H244 V480 H218 Z"/><path class="n" stroke="#b0b0b0" d="M250,439 L258,462 L266,439"/>`),
      ...al.map((a) => ic(RIGHT, a[0], 390, a[1], 498, svg`<g fill="#cacaca">${R(a[2])}</g>`)),
      vline(2374, 124, 50),
      { ...tx(2390, 156, 100, 21.5, "Transform", "w dots"), h: 26 },
      px(2512, 131, 32, 34, svg`<rect x="2515" y="141" width="10" height="13" fill="#777" stroke="#c3c3c3" stroke-width="2"/><rect x="2530" y="134" width="11" height="12" fill="#777" stroke="#c3c3c3" stroke-width="2"/><path d="M2528,142 L2543,157 H2535 L2528,164 Z" fill="#c3c3c3"/>`),
      chev(2565, 147),
      ic(RIGHT, 1338, 396, 1373, 486, svg`<g fill="#c3c3c3">${R([[1344, 408, 8, 24], [1359, 408, 8, 24], [1344, 450, 8, 24], [1359, 450, 8, 24]])}</g><g fill="#999">${R([[1339, 438, 33, 6], [1355, 396, 2, 90]])}</g>`),
      ic(RIGHT, 1397, 400, 1430, 487, svg`<g fill="#c3c3c3">${R([[1398, 402, 9, 24], [1398, 432, 9, 24], [1398, 462, 9, 24]])}</g><path d="M1411,427 H1418 Q1426,430 1426,442 Q1426,455 1418,458 H1411" fill="none" stroke="#c3c3c3" stroke-width="6"/>`),
      chev(2775, 147, "#888"),
      ic(RIGHT, 1504, 418, 1530, 470, svg`<g fill="#c3c3c3">${R([[1505, 420, 3, 8], [1505, 434, 3, 8], [1505, 448, 3, 8], [1505, 462, 3, 5], [1511, 424, 18, 5], [1511, 443, 18, 5], [1511, 462, 18, 5]])}</g>`),
    ]);
  }

  toolbox() {
    return html`<div class="tools">
      <div class="strip">${row(2, 185, [px(12, 189, 16, 12, svg`<path d="M19,190 L14,195 L19,200 M26,190 L21,195 L26,200" fill="none" stroke="#c3c3c3" stroke-width="2"/>`), px(52, 213, 38, 8, svg`<path d="M52,218 H90" stroke="#393939" stroke-width="8" stroke-dasharray="2 2"/>`)])}</div>
      <div class="toolgrid">${TOOL_ICONS.map(toolIcon)}</div>
      <svg class="tfoot" width="124" height="320" viewBox="35 1058 372 456" preserveAspectRatio="none">
        <defs>${grad("g1", ["#fff", "#333"], false)}</defs>
        <rect x="36" y="1058" width="362" height="2" fill="#484848"/>
        <path d="M305,1084 L332,1075 V1081 Q360,1082 360,1098 H372 L354,1106 L334,1098 H344 Q344,1089 332,1089 V1094 Z" fill="#c3c3c3"/>
        <path d="M145,1123 H360 V1225 H145 Z M205,1154 V1195 H299 V1154 Z" fill="#2a2a2a" fill-rule="evenodd"/>
        <path d="M150,1126 H355 V1222 H150 Z M198,1149 V1200 H305 V1149 Z" fill="#fff" fill-rule="evenodd"/>
        <path d="M156,1130 H348 V1219 H156 Z M198,1149 V1200 H305 V1149 Z" fill="#db3a32" fill-rule="evenodd"/>
        <rect x="201" y="1151" width="101" height="47" fill="none" stroke="#fff" stroke-width="4"/>
        <rect x="205" y="1154" width="93" height="42" fill="#535353" stroke="#2a2a2a" stroke-width="3"/>
        <rect x="38" y="1073" width="212" height="101" fill="#fff" stroke="#2a2a2a" stroke-width="4"/><path d="M43,1170 L245,1076" stroke="#ea3323" stroke-width="6"/>
        <rect x="53" y="1198" width="54" height="24" fill="#000" stroke="#c3c3c3" stroke-width="2"/><rect x="38" y="1190" width="50" height="23" fill="#000" stroke="#c3c3c3" stroke-width="2"/><rect x="44" y="1194" width="38" height="15" fill="#fff"/>
        <rect x="37" y="1244" width="352" height="58" rx="8" ry="5" fill="#4b4b4b" stroke="#5e5e5e" stroke-width="2"/><rect x="276" y="1246" width="108" height="54" fill="#2e2e2e"/>
        <path d="M152,1246 V1300 M272,1246 V1300 M152,1318 V1366 M272,1318 V1366" stroke="#5e5e5e" stroke-width="3"/>
        <rect x="57" y="1255" width="71" height="35" fill="#fff" stroke="#000" stroke-width="4"/><rect x="177" y="1255" width="71" height="35" fill="url(#g1)" stroke="#000" stroke-width="4"/><rect x="297" y="1255" width="71" height="35" fill="#fff" stroke="#000" stroke-width="4"/><path d="M301,1287 L365,1258" stroke="#ea3323" stroke-width="6"/>
        <rect x="37" y="1316" width="352" height="52" rx="8" ry="5" fill="#4b4b4b" stroke="#5e5e5e" stroke-width="2"/><rect x="42" y="1318" width="106" height="48" fill="#2e2e2e"/>
        ${[[90, "#6e6e6e", "#c3c3c3"], [210, "#6e6e6e", "#c3c3c3"], [330, "#555", "#666"]].map(([x, f, s], i) => svg`<ellipse cx=${x} cy="1339" rx="23" ry="11" fill=${f} stroke=${s} stroke-width="2.500"/><rect x=${+x + (i === 2 ? 6 : 1)} y="1340" width=${i === 2 ? 14 : 35} height=${i === 2 ? 9 : 17} fill=${s}/>`)}
        <rect class="s m" x="152" y="1404" width="80" height="32"/><rect class="s m" x="199" y="1392" width="82" height="32"/>
        ${[185, 216, 247].map((x) => svg`<ellipse cx=${x} cy="1505" rx="11" ry="5.500" fill="#c3c3c3"/>`)}
      </svg>
    </div>`;
  }

  document() {
    return html`<div class="doc">
      <div class="tabs"><div class="dtab">${row(148, 185, [px(163, 204, 14, 14, svg`<path d="M165,206 L175,216 M175,206 L165,216" stroke="#e6e6e6" stroke-width="2"/>`), tx(197, 218.5, 455, 21, "minichairah* @ 18.51% (CMYK/GPU Preview)", "sb w")])}</div></div>
      <div class="view"><svg class="canvas" viewBox="148 242 2132 1392">${artwork()}</svg>
        <div class="vs"><svg width="33" height="1392" viewBox="2280 242 33 1392"><path d="M2290,262 L2297,255 L2304,262 M2290,1612 L2297,1619 L2304,1612" fill="none" stroke="#999" stroke-width="2"/><rect x="2282" y="912" width="30" height="50" rx="14" fill="#5f5f5f"/></svg></div></div>
      <div class="status">${row(148, 1634, [
        box(148, 1634, 864, 30, "stl", [
          box(156, 1635, 137, 29, "sbox", [tx(162, 1662, 71, 20.5, "18.51%", "w"), box(257, 1637, 2, 27, "csep"), chev(273, 1655)], 2),
          ic(STATUS_L, 336, 130, 390, 182, svg`<path fill="#6e6e6e" d="M338,132 h3 v48 h-3 Z M355,132 V180 L342,156 Z M388,132 V180 L376,156 Z"/>`),
          box(375, 1635, 119, 29, "sbox", [tx(383, 1662, 10, 20.5, "1", "w"), box(457, 1637, 2, 27, "csep"), chev(473, 1655)], 2),
          ic(STATUS_L, 555, 130, 573, 182, svg`<path fill="#6e6e6e" d="M558,132 V180 L569,156 Z"/>`),
          ic(STATUS_L, 588, 130, 610, 182, svg`<path fill="#6e6e6e" d="M590,132 V180 L602,156 Z M604,132 h4 v48 h-4 Z"/>`),
          vline(576, 1636, 28),
          tx(732, 1662, 87, 20.5, "Selection", "lt"),
          vline(976, 1636, 28),
          px(988, 1644, 14, 16, svg`<path d="M989,1644 L1001,1652 L989,1660 Z" fill="#d0d0d0"/>`),
        ]),
        px(1024, 1643, 12, 16, svg`<path d="M1033,1644 L1026,1651 L1033,1658" fill="none" stroke="#999" stroke-width="2"/>`),
        box(1636, 1635, 50, 29, "thumb"),
        px(2257, 1643, 12, 16, svg`<path d="M2260,1644 L2267,1651 L2260,1658" fill="none" stroke="#999" stroke-width="2"/>`),
      ])}</div>
    </div>`;
  }

  dockcol() {
    return html`<div class="dockcol"><svg width="74" height="1456" viewBox="2318 208 74 1456">
      <path d="M2317,344.500 H2392 M2317,538.500 H2392 M2317,733 H2392 M2317,815 H2392" stroke="#393939" stroke-width="2.500"/>
      <defs>${grad("g2", ["#222", "#eee"], false)}</defs>
      <g transform="translate(2280,180) scale(.38266,.35714)">
        ${grip(146, 95)}${grip(146, 482)}${grip(146, 1025)}
        <path fill="#c6c6c6" d="M192,172 C205,166 225,167 238,180 C255,200 255,225 235,240 C215,250 180,247 165,238 C150,225 150,210 152,200 C160,190 175,196 190,194 C200,192 195,178 192,172 Z"/>
        <g fill="#535353"><circle cx="176" cy="221" r="11"/><circle cx="199" cy="229" r="10"/><circle cx="221" cy="225" r="9"/><circle cx="234" cy="211" r="7"/><circle cx="229" cy="195" r="6"/></g>
        <path d="M164,324 Q240,330 241,406 H164 Z" fill="#999" stroke="#d0d0d0" stroke-width="4"/><path d="M167,402 V328 Q175,328 183,332 Z" fill="#2b2b2b"/><path d="M167,402 L183,332 L202,340 Z" fill="#555"/><path d="M167,402 L225,368 L236,390 Z" fill="#ddd"/>
        <rect x="157" y="566" width="83" height="61" fill="#c6c6c6"/><g>${[[162, 571, "#999"], [214, 571, "#6a6a6a"], [162, 599, "#6a6a6a"], [188, 599, "#999"], [214, 599, "#8a8a8a"]].map((r) => svg`<rect x=${r[0]} y=${r[1]} width="21" height="23" fill=${r[2]}/>`)}</g>
        <path fill="#c6c6c6" d="M178,766 H225 V806 H178 Z M164,715 Q185,725 182,742 L190,766 H184 L176,749 Q160,745 164,715 Z M186,697 h12 v10 l6,5 v12 h-4 l4,40 h-6 l-6,-40 h-6 v-14 l3,-4 Z M212,724 Q235,712 243,742 Q232,742 227,738 L215,766 H208 L222,734 Z"/>
        <g fill="#c6c6c6"><circle cx="201" cy="878" r="19"/><circle cx="179" cy="909" r="20"/><circle cx="223" cy="909" r="20"/><path d="M196,885 h10 v26 q1,25 24,35 v6 h-58 v-6 q23,-10 24,-35 Z"/></g>
        <g fill="#d0d0d0">${R([[157, 1103, 89, 6], [157, 1126, 89, 12], [157, 1154, 89, 16]])}</g>
        <rect x="159" y="1262" width="85" height="63" fill="url(#g2)" stroke="#c6c6c6" stroke-width="5"/>
        <circle cx="186" cy="1441" r="34" fill="#c6c6c6"/><circle cx="210" cy="1468" r="32" fill="#8a8a8a" fill-opacity=".8" stroke="#c6c6c6" stroke-width="4"/>
      </g>
      <g transform="translate(2280,690) scale(.38266,.39541)">${grip(146, 125)}<path fill="none" stroke="#c6c6c6" stroke-width="4" d="M174,228 V193 H244 V262 H206"/><rect x="167" y="240" width="37" height="33" fill="#c6c6c6"/><path d="M192,250 V262 H180" stroke="#535353" stroke-width="3" fill="none"/><rect x="158" y="229" width="28" height="28" fill="#535353" stroke="#c6c6c6" stroke-width="4"/></g>
    </svg></div>`;
  }

  panels() {
    const tab = (x: number, y: number, w: number, h: number, on: boolean, t: Item) => box(x, y, w, h, on ? "tab on" : "tab", [t]);
    const W = "#e0e0e0";
    return html`<div class="panels">
      <div class="pt">${row(2398, 208, [
        tab(2398, 208, 92, 54, false, tx(2416.5, 241, 54, 21, "Links", "sb mid")), tab(2490, 208, 124, 54, true, tx(2506.5, 241, 90, 21, "Libraries", "b w")),
        tab(2614, 208, 186, 54, false, tx(2630.5, 241, 151, 21, "Document Info", "sb mid")), menuIcon(228),
      ])}</div>
      <div class="libhead">${row(2398, 262, [px(2415, 285, 19, 20, svg`<circle cx="2423" cy="293" r="6.500" fill="none" stroke="#fff" stroke-width="2"/><path d="M2428,298 L2433,303" stroke="#fff" stroke-width="2.500"/>`), tx(2444, 303.500, 327, 22, "Search libraries and Adobe Stock", "it dim", "hv")])}
        ${row(2398, 306.9, [box(2414, 316, 448, 2, "uline")])}
        ${row(2398, 318, [box(2414, 334, 448, 38, "drop", [tx(2436.500, 359.500, 117, 22, "Your Library", "w", "hv"), px(2832, 344, 20, 16, svg`<path d="M2835,349 L2842,356 L2849,349" fill="none" stroke="#fff" stroke-width="3.400"/>`)], 2)])}
        ${row(2398, 372, [tx(2414, 412, 126, 22, "View by type", "w", "hv"), px(2549, 399, 18, 16, svg`<path d="M2551,404 L2558,411 L2565,404" fill="none" stroke="#fff" stroke-width="3.400"/>`),
          box(2776, 384, 40, 40, "gbtn", [px(2784, 392, 25, 24, svg`<g fill=${W}>${R([[2784, 392, 10, 10], [2798, 392, 10, 10], [2784, 406, 10, 10], [2798, 406, 10, 10]])}</g>`)], 2),
          px(2828, 392, 26, 26, svg`<g fill=${W}>${R([[2828, 392, 6, 6], [2828, 402, 6, 6], [2828, 412, 6, 6], [2838, 394, 16, 2], [2838, 404, 16, 2], [2838, 414, 16, 2]])}</g>`)])}
      </div>
      <div class="empty">${row(2398, 436, [ic(LIB, 540, 765, 1335, 1190, svg`<g stroke="#a3a3a3" fill="none" stroke-linejoin="round" stroke-linecap="round">
        <rect x="549" y="915" width="233" height="168" rx="6" stroke-width="11"/>
        <path stroke-width="9" d="M560,1078 L637,997 L714,1076 M690,1048 L716,1022 L770,1078"/><ellipse cx="734" cy="962" rx="19" ry="21" stroke-width="9"/>
        <path stroke-width="11" d="M916,1086 H852 Q824,1084 824,1058 V808 Q826,780 852,779 H985 Q995,779 1005,788 L1048,832 Q1055,842 1055,850 V1058 Q1053,1084 1030,1086 H962 M867,988 H1012 M867,1030 H1012 M939,1060 V1174 M896,1130 L939,1176 L984,1130"/><path stroke-width="11" d="M1106,915 V905 Q1106,885 1124,885 H1184 Q1194,885 1200,895 L1212,912 M1106,915 H1305 Q1322,918 1322,935 V1070 Q1320,1086 1305,1088 H1124 Q1108,1086 1106,1070 Z"/></g>`)])}
        ${row(2398, 605, [tx(2458, 652, 362, 25.5, "Build a Creative Cloud library", "lt", "hv")])}</div>
      <div class="libfoot">${row(2398, 641, [
        ic(LIB, 358, 1322, 450, 1402, svg`<path d="M386,1327 h11 v28 h26 v11 h-26 v29 h-11 v-29 h-25 v-11 h25 Z M421,1383 h25 l-12,15 Z" fill=${W}/>`),
        ic(LIB, 480, 1325, 566, 1402, svg`<path d="M481,1332 Q481,1327 486,1327 H510 L526,1338 H564 V1400 H481 Z" fill=${W}/><path d="M486,1332 H509 L519,1341 H486 Z" fill="#535353"/>`),
        tx(2706.500, 674, 47, 20.500, "-- KB", "w", "hv"),
        ic(LIB, 1290, 1322, 1402, 1402, svg`<path d="M1312,1400 Q1292,1398 1292,1382 Q1292,1368 1308,1364 Q1310,1346 1330,1346 Q1336,1325 1356,1325 Q1378,1328 1379,1355 Q1400,1362 1400,1380 Q1398,1398 1382,1400 Z" fill=${W}/>`),
        trash(LIB, 1453, 1328, 1, "#999"),
      ])}</div>
      <div class="pgap"></div>
      <div class="pt">${row(2398, 696, [tab(2398, 696, 131, 54, true, tx(2416.500, 728, 95, 21, "Variables", "b w")), tab(2529, 696, 134, 54, false, tx(2546, 728, 119, 21, "Appearance", "sb mid")), tab(2663, 696, 137, 54, false, tx(2680, 728, 131, 21, "Asset Export", "sb mid")), menuIcon(715)])}</div>
      <div class="varbody">${row(2398, 750, [
        ic(VARS, 360, 210, 436, 270, svg`<path d="M361,220 h20 l6,-9 h22 l6,9 h19 v48 h-73 Z" fill="#7b7b7b"/><ellipse cx="397" cy="243" rx="14" ry="14" fill="#7b7b7b" stroke="#535353" stroke-width="5"/>`),
        tx(2457.500, 790, 85, 21, "Data Set:", "dim"), box(2556, 764, 216, 37, "ds", [chev(2752, 783, "#7b7b7b")]),
        px(2789, 773, 16, 26, svg`<path d="M2804,774 V798 L2790,786 Z" fill="#7f7f7f"/>`), px(2835, 773, 16, 26, svg`<path d="M2836,774 V798 L2850,786 Z" fill="#7f7f7f"/>`)])}
        ${row(2398, 801, [box(2408, 808, 52, 44, "th", [tx(2427.500, 838, 13, 21, "T", "w")], 2), box(2459, 808, 199, 44, "th", [tx(2514, 838, 88, 21, "Variables", "w")], 2), box(2657, 808, 211, 44, "th", [tx(2725, 838, 73, 21, "Objects", "w")], 2)])}
        ${row(2398, 852, [{ x: 2408, y: 852, w: 460, h: 288, c: "tb", t: html`
          ${row(2410, 852, [tx(2472, 930, 309, 20.500, "Import a data source file in XML", "lt")])}
          ${row(2410, 932.300, [tx(2472, 954, 135, 20.500, "or CSV format", "lt")])}
          ${row(2410, 956.300, [box(2565, 984, 143, 38, "btn", [tx(2605, 1010, 64, 21, "Import", "w")], 2)])}
          ${row(2410, 1022, [{ ...tx(2584.500, 1074, 107, 20.500, "Learn More", "w dots"), h: 25 }])}` }])}
        ${row(2398, 1140, [
          ic(VARS, 380, 1156, 426, 1212, svg`<path d="M382,1182 h41 v28 h-41 Z" fill="#c9c9c9"/><path d="M389,1182 V1170 Q390,1160 400,1160 H409" fill="none" stroke="#c9c9c9" stroke-width="5"/><circle cx="402" cy="1192" r="6" fill="#444"/><rect x="400" y="1194" width="4" height="10" fill="#444"/>`),
          ic(VARS, 798, 1154, 892, 1216, svg`<circle cx="820" cy="1193" r="10" fill="none" stroke="#757575" stroke-width="4"/><circle cx="820" cy="1193" r="17" fill="none" stroke="#757575" stroke-width="5" stroke-dasharray="4 9.300"/><path d="M840,1158 h14 v6 h14 v-6 h14 v7 h7 v34 h-42 q-6,-6 -7,-14 Z" fill="#757575"/>`),
          ic(VARS, 934, 1154, 1026, 1216, svg`<circle cx="956" cy="1193" r="10" fill="none" stroke="#c9c9c9" stroke-width="4"/><circle cx="956" cy="1193" r="17" fill="none" stroke="#c9c9c9" stroke-width="5" stroke-dasharray="4 9.300"/><path d="M968,1176 Q996,1142 1024,1177 Q1004,1198 978,1190 Z" fill="#c9c9c9"/><circle cx="994" cy="1176" r="12" fill="#535353"/><circle cx="994" cy="1176" r="7" fill="#c9c9c9"/>`),
          ic(VARS, 1080, 1154, 1158, 1218, svg`<path class="n" stroke="#757575" stroke-width="3" d="M1086,1158 L1150,1216 M1104,1172 Q1086,1172 1085,1186 Q1088,1200 1100,1199 H1112 M1122,1173 H1140 Q1154,1176 1153,1188 Q1150,1198 1142,1199"/>`),
          ic(VARS, 1227, 1157, 1288, 1216, svg`<rect class="n" stroke="#c9c9c9" x="1230" y="1160" width="54" height="53"/><path class="n" stroke="#c9c9c9" d="M1244,1187 H1271 M1257,1173 V1201"/>`),
          trash(VARS, 1358, 1152),
        ])}</div>
      <div class="pgap"></div>
      <div class="pt">${row(2398, 1184, [tab(2398, 1184, 104, 54, true, tx(2416.500, 1216, 66, 21, "Layers", "b w")), tab(2502, 1184, 138, 54, false, tx(2518, 1216, 103, 21, "Artboards", "sb mid")), menuIcon(1203)])}</div>
      <div>${row(2398, 1238, [{ x: 2408, y: 1250, w: 460, h: 378, c: "th", t: row(2410, 1252, [box(2410, 1252, 457, 41, "sel", [
          ic(VARS, 358, 1448, 422, 1488, svg`<path d="M359,1468 Q390,1432 420,1468 Q390,1502 359,1468 Z" fill="#c9c9c9"/><circle cx="390" cy="1467" r="13" fill="#566679"/><circle cx="390" cy="1467" r="8" fill="#c9c9c9"/>`),
          vline(2450, 1252, 41, "lsep"), vline(2492, 1252, 41, "lsep"), box(2496, 1254, 6, 37, "blue"), vline(2504, 1252, 41, "lsep"),
          px(2518, 1263, 12, 18, svg`<path d="M2520,1265 L2526,1272 L2520,1279" fill="none" stroke="#fff" stroke-width="2.200"/>`),
          box(2554, 1254, 36, 36, "thumbn", [px(2556, 1261, 32, 22, svg`<path d="M2556,1262 H2577 Q2572,1274 2566,1276 L2564,1283 H2556 Z" fill="#b99cc4"/><path d="M2557,1264 L2563,1270 L2560,1278 M2566,1263 L2572,1270 L2576,1264" stroke="#7484c8" fill="none"/><path d="M2556,1261.500 H2588 M2577,1262 V1283 M2564,1283 V1277 H2576 M2570,1270 H2576 V1276 M2577,1283 H2588" fill="none" stroke="#8a93cf" stroke-width="1"/>`)], 2),
          tx(2600.500, 1280, 69, 21, "Layer 1", "w"), vline(2794, 1252, 41, "lsep"),
          px(2807, 1263, 18, 18, svg`<circle cx="2816" cy="1272" r="7.500" fill="none" stroke="#c9c9c9" stroke-width="2"/>`),
          px(2836, 1266, 12, 12, svg`<rect x="2837" y="1267" width="10" height="10" fill="#5584f7" stroke="#000" stroke-width="2"/>`),
          px(2854, 1252, 13, 12, svg`<path d="M2854,1252 H2866 V1264 Z" fill="#d0d0d0"/>`),
        ])]) }])}
        ${row(2398, 1628, [tx(2409, 1654, 69, 20.500, "1 Layer", "lt"),
          px(2540, 1634, 26, 26, svg`<path d="M2551,1639 H2541 V1657 H2559 V1648 M2548,1650 L2562,1636 M2554,1635.500 H2563 V1645" fill="none" stroke="#c3c3c3" stroke-width="2"/>`),
          px(2591, 1633, 28, 28, svg`<circle cx="2600" cy="1643" r="8" fill="none" stroke="#c3c3c3" stroke-width="2"/><path d="M2606,1649 L2616,1659" stroke="#c3c3c3" stroke-width="3"/>`),
          px(2643, 1635, 24, 24, svg`<rect x="2651" y="1643" width="14" height="14" fill="#777" stroke="#8a8a8a" stroke-width="2"/><rect x="2645" y="1637" width="14" height="15" fill="none" stroke="#d0d0d0" stroke-width="2"/><rect x="2651" y="1643" width="8" height="9" fill="#d0d0d0"/>`),
          px(2691, 1635, 32, 24, svg`<path d="M2693,1635 V1645 H2700 M2698,1641 L2702,1645 L2698,1649" fill="none" stroke="#c3c3c3" stroke-width="2"/><rect x="2705" y="1639" width="16" height="18" fill="none" stroke="#c3c3c3" stroke-width="2"/><path d="M2708,1648 H2718 M2713,1643 V1653" stroke="#c3c3c3" stroke-width="2"/>`),
          px(2749, 1635, 24, 24, svg`<rect x="2751" y="1637" width="20" height="20" fill="none" stroke="#c9c9c9" stroke-width="2"/><path d="M2756,1647 H2766 M2761,1642 V1652" stroke="#c9c9c9" stroke-width="2"/>`),
          px(2799, 1633, 24, 27, svg`<path d="M2800,1640 H2822 M2807,1639 V1635 H2815 V1639 M2803,1641 V1658 H2819 V1641 M2808,1644 V1655 M2811,1644 V1655 M2814,1644 V1655" fill="none" stroke="#777" stroke-width="1.800"/>`),
        ])}</div>
    </div>`;
  }

  render() {
    return html`
      <div class="menubar">${this.menubar()}</div>
      <div class="gap"></div>
      <div class="win">
        <div class="title">${this.title()}</div>
        <div class="ctrl">${this.control()}</div>
        <div class="main">
          ${this.toolbox()}
          <div class="vgap"></div>
          ${this.document()}
          <div class="vgap thin"></div>
          <div class="side">
            <div class="strip">${row(2318, 185, [px(2366, 189, 16, 12, svg`<path d="M2373,190 L2368,195 L2373,200 M2380,190 L2375,195 L2380,200" fill="none" stroke="#c3c3c3" stroke-width="2"/>`), px(2850, 189, 16, 12, svg`<path d="M2852,190 L2857,195 L2852,200 M2859,190 L2864,195 L2859,200" fill="none" stroke="#c3c3c3" stroke-width="2"/>`)])}</div>
            <div class="cols">${this.dockcol()}<div class="vgap"></div>${this.panels()}</div>
          </div>
        </div>
      </div>
      <div class="under">${row(0, 1668, [box(44, 1668, 442, 10, "edge1 l"), { x: 486, y: 1668, w: 2065, h: 20, t: html`<div class="edge1" style="height:10px"></div><div class="edge2" style="height:10px"></div>` }, box(2551, 1668, 329, 20, "edge3")])}</div>
      <div class="dock">${DOCK.map(dockCell)}</div>`;
  }
}
customElements.define("app-root", AppRoot);
